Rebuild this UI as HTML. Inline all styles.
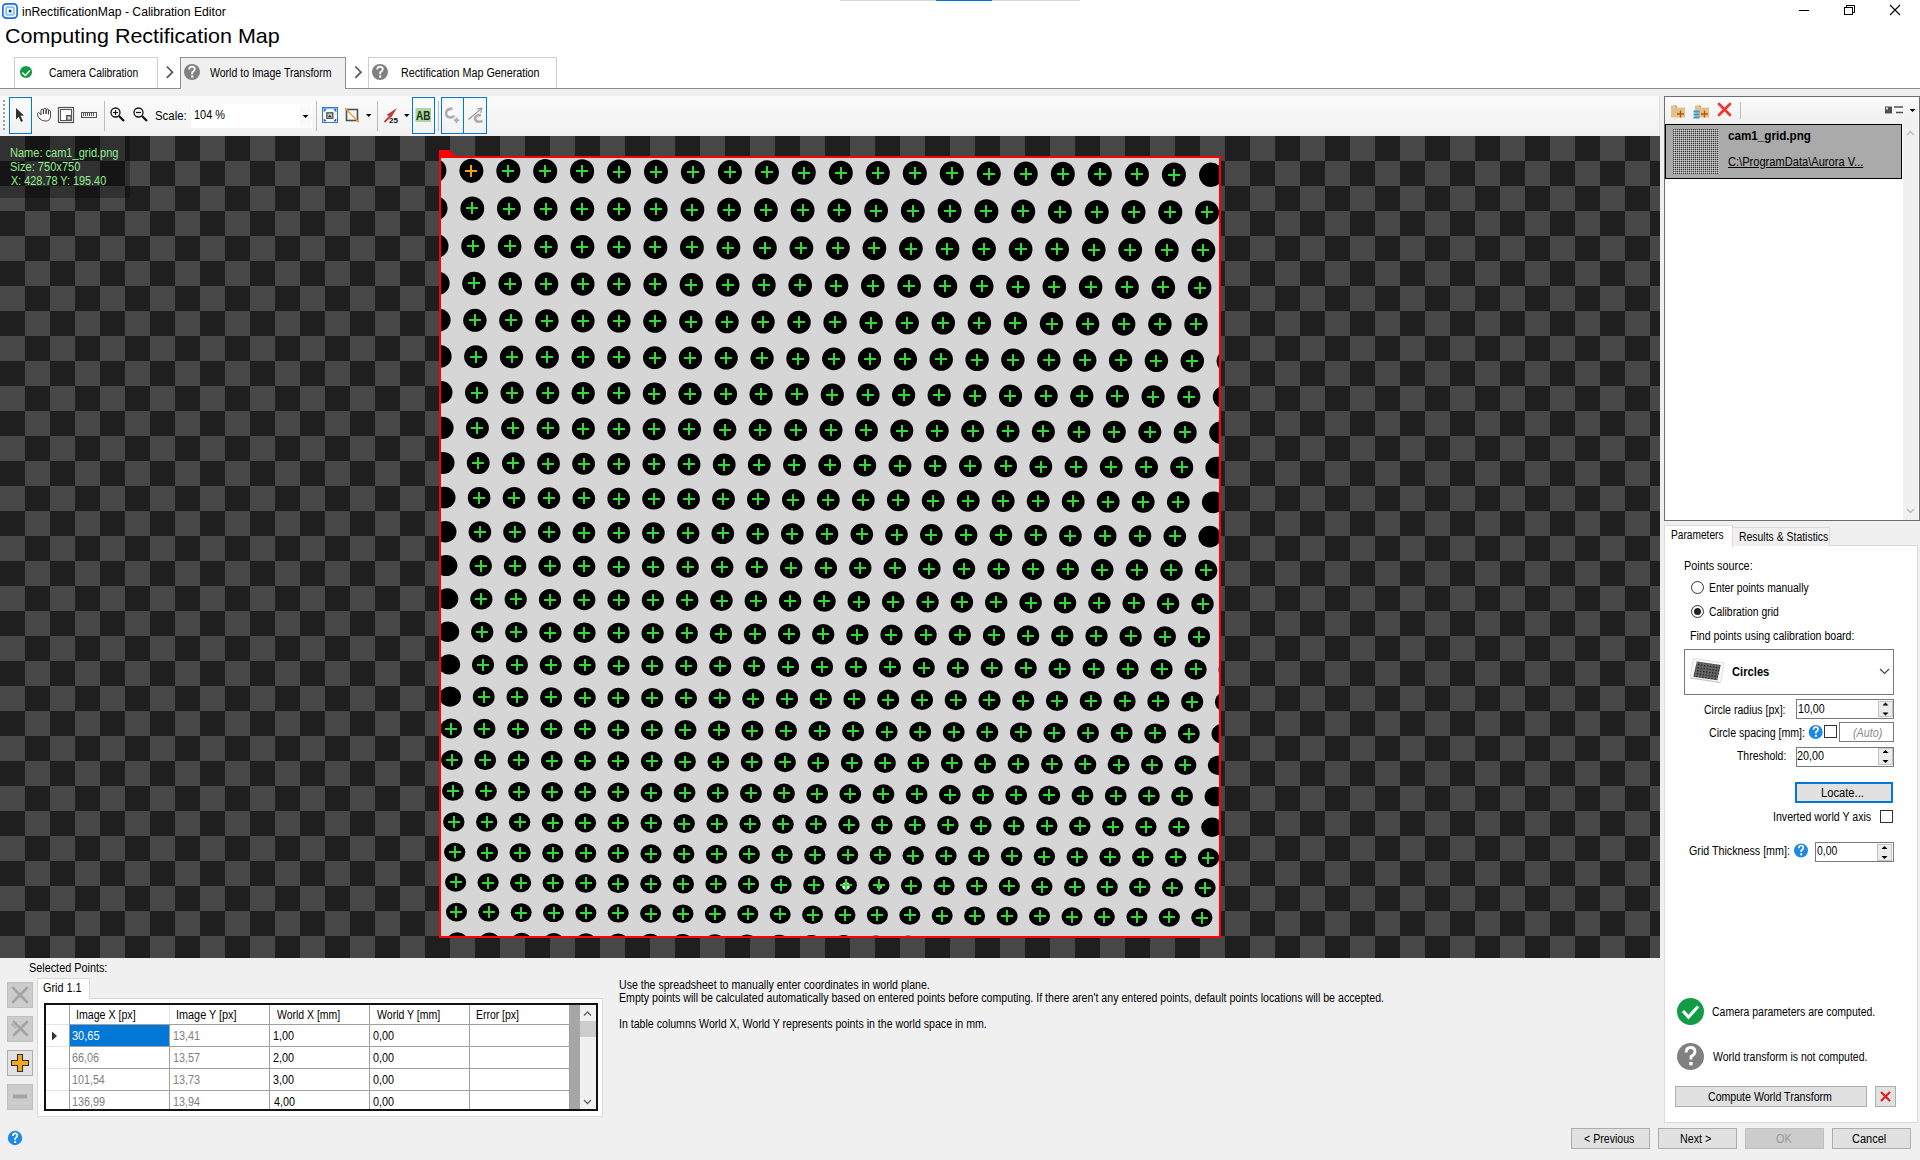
<!DOCTYPE html>
<html><head><meta charset="utf-8">
<style>
*{box-sizing:border-box;margin:0;padding:0}
html,body{width:1920px;height:1160px;overflow:hidden;background:#f0f0f0;font-family:"Liberation Sans",sans-serif;font-size:12px;color:#000}
.a{position:absolute}
.t{position:absolute;white-space:nowrap;line-height:14px}
.btn{position:absolute;background:#e1e1e1;border:1px solid #adadad;text-align:center;line-height:19px}
.inp{position:absolute;background:#fff;border:1px solid #7a7a7a}
svg{position:absolute}
#title{left:21.98px!important;top:5px!important;line-height:14px!important;transform-origin:0 0;transform:scaleX(1.0150)}
#hdr{left:4.78px!important;top:24px!important;line-height:24px!important;transform-origin:0 0;transform:scaleX(1.0232)}
#tab1{left:48.64px!important;top:66px!important;line-height:14px!important;transform-origin:0 0;transform:scaleX(0.8627)}
#tab2{left:210.00px!important;top:66px!important;line-height:14px!important;transform-origin:0 0;transform:scaleX(0.8768)}
#tab3{left:401.10px!important;top:66px!important;line-height:14px!important;transform-origin:0 0;transform:scaleX(0.8954)}
#scl{left:155.05px!important;top:109px!important;line-height:14px!important;transform-origin:0 0;transform:scaleX(0.9516)}
#pct{left:193.89px!important;top:108px!important;line-height:14px!important;transform-origin:0 0;transform:scaleX(0.9091)}
#nm{left:10.28px!important;top:146px!important;line-height:14px!important;transform-origin:0 0;transform:scaleX(0.9188)}
#sz{left:9.97px!important;top:160px!important;line-height:14px!important;transform-origin:0 0;transform:scaleX(0.9267)}
#xy{left:10.80px!important;top:174px!important;line-height:14px!important;transform-origin:0 0;transform:scaleX(0.9048)}
#fname{left:1728.00px!important;top:129px!important;line-height:14px!important;transform-origin:0 0;transform:scaleX(0.9718)}
#fpath{left:1728.00px!important;top:155px!important;line-height:14px!important;transform-origin:0 0;transform:scaleX(0.9247)}
#ptab{left:1671.45px!important;top:528px!important;line-height:14px!important;transform-origin:0 0;transform:scaleX(0.8475)}
#rtab{left:1738.63px!important;top:530px!important;line-height:14px!important;transform-origin:0 0;transform:scaleX(0.8693)}
#psrc{left:1684.10px!important;top:559px!important;line-height:14px!important;transform-origin:0 0;transform:scaleX(0.9027)}
#rad1{left:1709.14px!important;top:581px!important;line-height:14px!important;transform-origin:0 0;transform:scaleX(0.8635)}
#rad2{left:1708.84px!important;top:605px!important;line-height:14px!important;transform-origin:0 0;transform:scaleX(0.8646)}
#fpts{left:1690.12px!important;top:629px!important;line-height:14px!important;transform-origin:0 0;transform:scaleX(0.8837)}
#circ{left:1732.00px!important;top:665px!important;line-height:14px!important;transform-origin:0 0;transform:scaleX(0.9325)}
#lrad{left:1703.72px!important;top:703px!important;line-height:14px!important;transform-origin:0 0;transform:scaleX(0.8791)}
#vrad{left:1798.11px!important;top:702px!important;line-height:14px!important;transform-origin:0 0;transform:scaleX(0.8862)}
#lspc{left:1708.62px!important;top:726px!important;line-height:14px!important;transform-origin:0 0;transform:scaleX(0.8832)}
#auto{left:1852.50px!important;top:726px!important;line-height:14px!important;transform-origin:0 0;transform:scaleX(0.8969)}
#lthr{left:1736.70px!important;top:749px!important;line-height:14px!important;transform-origin:0 0;transform:scaleX(0.8696)}
#vthr{left:1797.20px!important;top:749px!important;line-height:14px!important;transform-origin:0 0;transform:scaleX(0.8966)}
#locb{left:1821.27px!important;top:786px!important;line-height:14px!important;transform-origin:0 0;transform:scaleX(0.9318)}
#linv{left:1773.32px!important;top:810px!important;line-height:14px!important;transform-origin:0 0;transform:scaleX(0.8845)}
#lgth{left:1688.61px!important;top:844px!important;line-height:14px!important;transform-origin:0 0;transform:scaleX(0.8919)}
#vgth{left:1817.00px!important;top:844px!important;line-height:14px!important;transform-origin:0 0;transform:scaleX(0.8696)}
#st1{left:1711.73px!important;top:1005px!important;line-height:14px!important;transform-origin:0 0;transform:scaleX(0.8741)}
#st2{left:1713.30px!important;top:1050px!important;line-height:14px!important;transform-origin:0 0;transform:scaleX(0.8750)}
#cwt{left:1707.62px!important;top:1090px!important;line-height:14px!important;transform-origin:0 0;transform:scaleX(0.8820)}
#bprev{left:1584.02px!important;top:1132px!important;line-height:14px!important;transform-origin:0 0;transform:scaleX(0.8839)}
#bnext{left:1680.31px!important;top:1132px!important;line-height:14px!important;transform-origin:0 0;transform:scaleX(0.8941)}
#bok{left:1775.60px!important;top:1132px!important;line-height:14px!important;transform-origin:0 0;transform:scaleX(0.9059)}
#bcan{left:1852.38px!important;top:1132px!important;line-height:14px!important;transform-origin:0 0;transform:scaleX(0.9167)}
#selp{left:29.10px!important;top:961px!important;line-height:14px!important;transform-origin:0 0;transform:scaleX(0.9035)}
#grid11{left:43.40px!important;top:981px!important;line-height:14px!important;transform-origin:0 0;transform:scaleX(0.9049)}
#h1{left:76.42px!important;top:1008px!important;line-height:14px!important;transform-origin:0 0;transform:scaleX(0.8848)}
#h2{left:176.10px!important;top:1008px!important;line-height:14px!important;transform-origin:0 0;transform:scaleX(0.9046)}
#h3{left:276.90px!important;top:1008px!important;line-height:14px!important;transform-origin:0 0;transform:scaleX(0.8722)}
#h4{left:377.20px!important;top:1008px!important;line-height:14px!important;transform-origin:0 0;transform:scaleX(0.8789)}
#h5{left:476.23px!important;top:1008px!important;line-height:14px!important;transform-origin:0 0;transform:scaleX(0.8688)}
#info1{left:619.32px!important;top:978px!important;line-height:14px!important;transform-origin:0 0;transform:scaleX(0.8823)}
#info2{left:619.32px!important;top:991px!important;line-height:14px!important;transform-origin:0 0;transform:scaleX(0.8846)}
#info3{left:619.32px!important;top:1017px!important;line-height:14px!important;transform-origin:0 0;transform:scaleX(0.8827)}
#c11{left:72.38px!important;top:1029px!important;line-height:14px!important;transform-origin:0 0;transform:scaleX(0.9172)}
#c12{left:172.50px!important;top:1029px!important;line-height:14px!important;transform-origin:0 0;transform:scaleX(0.9000)}
#c13{left:272.60px!important;top:1029px!important;line-height:14px!important;transform-origin:0 0;transform:scaleX(0.9000)}
#c14{left:373.00px!important;top:1029px!important;line-height:14px!important;transform-origin:0 0;transform:scaleX(0.9000)}
#c21{left:72.40px!important;top:1051px!important;line-height:14px!important;transform-origin:0 0;transform:scaleX(0.9000)}
#c22{left:172.50px!important;top:1051px!important;line-height:14px!important;transform-origin:0 0;transform:scaleX(0.9000)}
#c23{left:272.60px!important;top:1051px!important;line-height:14px!important;transform-origin:0 0;transform:scaleX(0.9000)}
#c24{left:373.00px!important;top:1051px!important;line-height:14px!important;transform-origin:0 0;transform:scaleX(0.9000)}
#c31{left:72.41px!important;top:1073px!important;line-height:14px!important;transform-origin:0 0;transform:scaleX(0.8944)}
#c32{left:172.50px!important;top:1073px!important;line-height:14px!important;transform-origin:0 0;transform:scaleX(0.9000)}
#c33{left:272.60px!important;top:1073px!important;line-height:14px!important;transform-origin:0 0;transform:scaleX(0.9000)}
#c34{left:373.00px!important;top:1073px!important;line-height:14px!important;transform-origin:0 0;transform:scaleX(0.9000)}
#c41{left:72.40px!important;top:1095px!important;line-height:14px!important;transform-origin:0 0;transform:scaleX(0.9000)}
#c42{left:172.50px!important;top:1095px!important;line-height:14px!important;transform-origin:0 0;transform:scaleX(0.9000)}
#c43{left:273.50px!important;top:1095px!important;line-height:14px!important;transform-origin:0 0;transform:scaleX(0.9000)}
#c44{left:373.00px!important;top:1095px!important;line-height:14px!important;transform-origin:0 0;transform:scaleX(0.9000)}
</style></head><body>
<!-- top white area -->
<div class="a" style="left:0;top:0;width:1920px;height:88px;background:#fff"></div>
<div class="a" style="left:840px;top:0;width:240px;height:1px;background:#d6d6d6"></div>
<div class="a" style="left:936px;top:0;width:56px;height:1px;background:#0078d7"></div>
<!-- app icon -->
<svg style="left:0;top:0" width="24" height="24">
<rect x="2" y="3" width="16" height="16" rx="4.5" fill="#1a6fe0"/>
<rect x="3.7" y="4.7" width="12.6" height="12.6" rx="3" fill="#fff"/>
<rect x="5.2" y="6.2" width="9.6" height="9.6" rx="2" fill="#8cc3f7"/>
<rect x="7" y="8" width="6" height="6" rx="1" fill="#f4f9ff"/>
<rect x="8.8" y="9.8" width="2.6" height="2.6" fill="#0d3f88"/>
</svg>
<div class="t" id="title" style="left:23px;top:4px">inRectificationMap - Calibration Editor</div>
<!-- window controls -->
<svg style="left:1790px;top:0" width="130" height="24">
<line x1="9" y1="10.5" x2="19" y2="10.5" stroke="#000" stroke-width="1"/>
<rect x="54.5" y="7.5" width="8" height="7" fill="none" stroke="#000"/>
<path d="M56.5 7.5 V5.5 H64.5 V12.5 H62.5" fill="none" stroke="#000"/>
<path d="M100 5 L110 15 M110 5 L100 15" stroke="#000" stroke-width="1.1"/>
</svg>
<div class="t" id="hdr" style="left:6px;top:24px;font-size:21px;line-height:24px">Computing Rectification Map</div>
<!-- wizard tabs -->
<div class="a" style="left:0;top:88px;width:180px;height:1px;background:#8f8f8f"></div>
<div class="a" style="left:346px;top:88px;width:1574px;height:1px;background:#8f8f8f"></div>
<div class="a" style="left:14px;top:57px;width:144px;height:31px;background:#fff;border:1px solid #cfcfc8;border-bottom:none"></div>
<div class="a" style="left:180px;top:57px;width:166px;height:32px;background:#f0f0f0;border:1px solid #8f8f8f;border-bottom:none"></div>
<div class="a" style="left:368px;top:57px;width:189px;height:31px;background:#fff;border:1px solid #cfcfc8;border-bottom:none"></div>
<svg style="left:0;top:50px" width="600" height="40">
<circle cx="26" cy="22" r="6.1" fill="#129943"/>
<path d="M22.3 22.4 L25.3 25.5 L30 20.4" fill="none" stroke="#fff" stroke-width="1.5"/>
<path d="M166.8 16.5 L172.5 22.2 L166.8 27.9" fill="none" stroke="#555" stroke-width="1.7"/>
<path d="M355.3 16.5 L361 22.2 L355.3 27.9" fill="none" stroke="#555" stroke-width="1.7"/>
<circle cx="192" cy="22" r="8" fill="#808080"/>
<circle cx="380" cy="22" r="8" fill="#808080"/>
<path d="M189.2 19.6 Q189.2 16.6 192 16.6 Q194.8 16.6 194.8 19.2 Q194.8 21 192.2 22.4 L192.2 24.2" fill="none" stroke="#fff" stroke-width="1.8"/>
<rect x="191.1" y="25.4" width="2.2" height="2.2" fill="#fff"/>
<path d="M377.2 19.6 Q377.2 16.6 380 16.6 Q382.8 16.6 382.8 19.2 Q382.8 21 380.2 22.4 L380.2 24.2" fill="none" stroke="#fff" stroke-width="1.8"/>
<rect x="379.1" y="25.4" width="2.2" height="2.2" fill="#fff"/>
</svg>
<div class="t" id="tab1" style="left:49px;top:65px">Camera Calibration</div>
<div class="t" id="tab2" style="left:210px;top:65px">World to Image Transform</div>
<div class="t" id="tab3" style="left:402px;top:65px">Rectification Map Generation</div>

<!-- toolbar -->
<div class="a" style="left:0;top:96px;width:1660px;height:40px;background:linear-gradient(#fbfbfb,#f1f1f1);border-right:1px solid #e0e0e0"></div>
<svg style="left:0;top:96px" width="500" height="40">
<g fill="#a0a0a0"><rect x="3" y="4" width="2" height="2"/><rect x="3" y="8" width="2" height="2"/><rect x="3" y="12" width="2" height="2"/><rect x="3" y="16" width="2" height="2"/><rect x="3" y="20" width="2" height="2"/><rect x="3" y="24" width="2" height="2"/><rect x="3" y="28" width="2" height="2"/><rect x="3" y="32" width="2" height="2"/></g>
<rect x="9.5" y="1.5" width="22" height="36" fill="none" stroke="#0078d7"/>
<path d="M16 12 L24 19.5 L20.5 19.8 L23 25 L21 26 L18.8 20.8 L16 23.5 Z" fill="#333"/>
<path d="M40 23 Q37 20 37.5 17.5 Q38 16 39.5 17 L41 19 L41 14.5 Q41 13.3 42.2 13.3 Q43.4 13.3 43.4 14.5 L43.4 18 L43.6 13.5 Q43.6 12.3 44.8 12.3 Q46 12.3 46 13.5 L46 18 L46.2 14 Q46.2 12.9 47.3 12.9 Q48.4 12.9 48.4 14 L48.4 18.3 L48.6 15.5 Q48.6 14.5 49.5 14.5 Q50.5 14.5 50.5 15.5 L50.5 20 Q50.5 25 45.5 25 Q42 25 40 23 Z" fill="#fff" stroke="#333" stroke-width="0.9"/>
<rect x="58.5" y="11.5" width="15" height="15" fill="none" stroke="#555" stroke-width="1.2"/>
<rect x="60.5" y="13.5" width="11" height="11" fill="#fff" stroke="#555"/>
<rect x="66" y="19" width="6" height="6" fill="#555"/><rect x="67.5" y="20.5" width="3" height="3" fill="#ddd"/>
<rect x="81.5" y="16.5" width="15" height="5" fill="none" stroke="#555"/>
<path d="M83.5 17 V20 M85.5 17 V20 M87.5 17 V20 M89.5 17 V20 M91.5 17 V20 M93.5 17 V20" stroke="#555"/>
<line x1="104.5" y1="5" x2="104.5" y2="35" stroke="#bdbdbd"/>
<circle cx="115.5" cy="16.5" r="4.5" fill="none" stroke="#111" stroke-width="1.3"/>
<path d="M113 16.5 H118 M115.5 14 V19" stroke="#111" stroke-width="1.2"/>
<path d="M119 20 L124 25" stroke="#111" stroke-width="2.2"/>
<circle cx="138.5" cy="16.5" r="4.5" fill="none" stroke="#111" stroke-width="1.3"/>
<path d="M136 16.5 H141" stroke="#111" stroke-width="1.2"/>
<path d="M142 20 L147 25" stroke="#111" stroke-width="2.2"/>
<rect x="191" y="8" width="121" height="24" fill="#fff"/>
<rect x="300" y="9" width="11" height="22" fill="#fafafa"/>
<path d="M302.5 19 H308.5 L305.5 22 Z" fill="#000"/>
<line x1="316.5" y1="5" x2="316.5" y2="35" stroke="#bdbdbd"/>
<rect x="322.5" y="11.5" width="15" height="15" fill="#f2f5f8" stroke="#3a78b8"/><path d="M323 12 H337" stroke="#1a80e0"/>
<rect x="326.8" y="16.8" width="6" height="5.5" fill="#c4c4c4" stroke="#555" stroke-width="1.3"/>
<path d="M328 21 L329.8 19 L331.6 21 Z" fill="#222"/>
<path d="M324 15.5 V13.5 H326 Z M336 13.5 H334 L336 15.5 Z M324 23 V25 H326 Z M336 25 H334 L336 23 Z" fill="#2a5ad8" stroke="#2a5ad8" stroke-width="0.8"/>
<rect x="346.5" y="13.5" width="11" height="11" fill="none" stroke="#4a4f55" stroke-width="1.6"/>
<line x1="345" y1="12" x2="359" y2="26.5" stroke="#f0a030" stroke-width="1.4"/>
<path d="M366 18 H371.5 L368.75 21 Z" fill="#000"/>
<line x1="377.5" y1="5" x2="377.5" y2="35" stroke="#bdbdbd"/>
<path d="M384.5 26 L391 19.5" stroke="#c43a3a" stroke-width="1.8"/>
<path d="M397 12 L386.5 19 L391.5 21 Z" fill="#c43a3a"/>
<text x="389" y="26.8" font-family="Liberation Sans" font-size="8" font-weight="bold" textLength="9" lengthAdjust="spacingAndGlyphs" fill="#111">25</text>
<path d="M404 18 H409.5 L406.75 21 Z" fill="#000"/>
<rect x="412.5" y="1.5" width="22" height="36" fill="none" stroke="#0078d7"/>
<rect x="415.5" y="12" width="15.5" height="14" fill="#add5a0"/>
<text x="416" y="24.2" font-family="Liberation Sans" font-size="13.5" font-weight="bold" textLength="14.5" lengthAdjust="spacingAndGlyphs" fill="#17310c">AB</text>
<line x1="438.5" y1="5" x2="438.5" y2="35" stroke="#bdbdbd"/>
<rect x="441.5" y="1.5" width="22" height="36" fill="none" stroke="#0078d7"/>
<rect x="463.5" y="1.5" width="23" height="36" fill="none" stroke="#0078d7"/>
<path d="M452.5 12.5 Q446 13 446 17.5 Q446.5 21.5 451 21.5 L454.5 20" fill="none" stroke="#ababab" stroke-width="2.4"/>
<path d="M453.8 24.3 H459.2 M456.5 21.6 V27" stroke="#b0b0b0" stroke-width="2"/>
<path d="M468.5 23.5 L481.5 12.5" stroke="#9c9c9c" stroke-width="1.1"/>
<path d="M477 13 L481.8 12.2 L480.8 17" fill="none" stroke="#9c9c9c" stroke-width="1.1"/>
<path d="M481 19 Q475 19 475 22.5 Q475.5 25.8 479 25.8 L482.5 25" fill="none" stroke="#ababab" stroke-width="2.4"/>
</svg>
<div class="t" id="scl" style="left:156px;top:108px">Scale:</div>
<div class="t" id="pct" style="left:195px;top:108px">104 %</div>

<!-- canvas -->
<svg style="left:0;top:136px" width="1660" height="822" shape-rendering="crispEdges">
<defs><pattern id="chk" x="0" y="0" width="50" height="50" patternUnits="userSpaceOnUse">
<rect width="50" height="50" fill="#1f1f1f"/><rect width="25" height="25" fill="#474747"/><rect x="25" y="25" width="25" height="25" fill="#474747"/></pattern>
<filter id="nz" x="0" y="0" width="100%" height="100%"><feTurbulence type="fractalNoise" baseFrequency="0.9" numOctaves="2" seed="3"/><feColorMatrix values="0 0 0 0 0.84  0 0 0 0 0.84  0 0 0 0 0.84  0 0 0 0.12 0"/><feBlend in2="SourceGraphic"/></filter>
</defs>
<rect width="1660" height="822" fill="url(#chk)"/>
<rect x="0" y="0" width="130" height="62" fill="#000" fill-opacity="0.3"/>
<path d="M439 14 H449.5 L456 20 H1221 V802 H439 Z" fill="#ff0000"/>
<rect x="441" y="22" width="778" height="778" fill="#d6d6d6"/>
<clipPath id="imgclip"><rect x="441" y="22" width="778" height="778"/></clipPath>
<g clip-path="url(#imgclip)">
<g fill="#000" shape-rendering="geometricPrecision"><ellipse cx="434.4" cy="34.6" rx="12.0" ry="12.1"/><ellipse cx="471.4" cy="34.8" rx="12.0" ry="12.1"/><ellipse cx="508.3" cy="35.0" rx="12.0" ry="12.1"/><ellipse cx="545.2" cy="35.2" rx="12.0" ry="12.1"/><ellipse cx="582.1" cy="35.4" rx="12.0" ry="12.1"/><ellipse cx="619.0" cy="35.6" rx="12.0" ry="12.1"/><ellipse cx="656.0" cy="35.8" rx="12.0" ry="12.1"/><ellipse cx="692.9" cy="36.0" rx="12.0" ry="12.1"/><ellipse cx="729.9" cy="36.2" rx="12.0" ry="12.1"/><ellipse cx="766.9" cy="36.4" rx="12.0" ry="12.1"/><ellipse cx="803.8" cy="36.6" rx="12.0" ry="12.1"/><ellipse cx="840.8" cy="36.8" rx="12.0" ry="12.1"/><ellipse cx="877.8" cy="37.0" rx="12.0" ry="12.1"/><ellipse cx="914.8" cy="37.2" rx="12.0" ry="12.1"/><ellipse cx="951.8" cy="37.4" rx="12.0" ry="12.2"/><ellipse cx="988.8" cy="37.6" rx="12.0" ry="12.2"/><ellipse cx="1025.8" cy="37.8" rx="12.0" ry="12.2"/><ellipse cx="1062.8" cy="38.0" rx="12.0" ry="12.2"/><ellipse cx="1099.8" cy="38.2" rx="12.0" ry="12.2"/><ellipse cx="1136.9" cy="38.4" rx="12.0" ry="12.2"/><ellipse cx="1173.9" cy="38.6" rx="12.0" ry="12.2"/><ellipse cx="1211.0" cy="38.8" rx="12.0" ry="12.2"/><ellipse cx="435.6" cy="72.2" rx="11.9" ry="12.0"/><ellipse cx="472.3" cy="72.4" rx="11.9" ry="12.0"/><ellipse cx="508.9" cy="72.6" rx="11.9" ry="12.0"/><ellipse cx="545.6" cy="72.8" rx="11.9" ry="12.0"/><ellipse cx="582.3" cy="73.0" rx="11.9" ry="12.0"/><ellipse cx="619.0" cy="73.2" rx="11.9" ry="12.0"/><ellipse cx="655.7" cy="73.4" rx="11.9" ry="12.0"/><ellipse cx="692.4" cy="73.6" rx="11.9" ry="12.0"/><ellipse cx="729.1" cy="73.8" rx="11.9" ry="12.0"/><ellipse cx="765.9" cy="74.0" rx="11.9" ry="12.0"/><ellipse cx="802.6" cy="74.2" rx="11.9" ry="12.0"/><ellipse cx="839.3" cy="74.4" rx="11.9" ry="12.0"/><ellipse cx="876.1" cy="74.6" rx="11.9" ry="12.0"/><ellipse cx="912.8" cy="74.8" rx="11.9" ry="12.0"/><ellipse cx="949.6" cy="75.1" rx="11.9" ry="12.0"/><ellipse cx="986.4" cy="75.3" rx="12.0" ry="12.0"/><ellipse cx="1023.2" cy="75.5" rx="12.0" ry="12.0"/><ellipse cx="1059.9" cy="75.7" rx="12.0" ry="12.0"/><ellipse cx="1096.7" cy="75.9" rx="12.0" ry="12.0"/><ellipse cx="1133.5" cy="76.1" rx="12.0" ry="12.0"/><ellipse cx="1170.3" cy="76.3" rx="12.0" ry="12.0"/><ellipse cx="1207.1" cy="76.5" rx="12.0" ry="12.0"/><ellipse cx="436.7" cy="110.0" rx="11.8" ry="11.8"/><ellipse cx="473.1" cy="110.2" rx="11.8" ry="11.8"/><ellipse cx="509.6" cy="110.4" rx="11.8" ry="11.8"/><ellipse cx="546.0" cy="110.6" rx="11.8" ry="11.8"/><ellipse cx="582.5" cy="110.8" rx="11.9" ry="11.8"/><ellipse cx="619.0" cy="111.0" rx="11.9" ry="11.8"/><ellipse cx="655.4" cy="111.2" rx="11.9" ry="11.8"/><ellipse cx="691.9" cy="111.4" rx="11.9" ry="11.8"/><ellipse cx="728.4" cy="111.6" rx="11.9" ry="11.8"/><ellipse cx="764.9" cy="111.8" rx="11.9" ry="11.8"/><ellipse cx="801.4" cy="112.0" rx="11.9" ry="11.8"/><ellipse cx="837.9" cy="112.2" rx="11.9" ry="11.8"/><ellipse cx="874.4" cy="112.4" rx="11.9" ry="11.8"/><ellipse cx="910.9" cy="112.6" rx="11.9" ry="11.8"/><ellipse cx="947.5" cy="112.8" rx="11.9" ry="11.8"/><ellipse cx="984.0" cy="113.1" rx="11.9" ry="11.9"/><ellipse cx="1020.6" cy="113.3" rx="11.9" ry="11.9"/><ellipse cx="1057.1" cy="113.5" rx="11.9" ry="11.9"/><ellipse cx="1093.7" cy="113.7" rx="11.9" ry="11.9"/><ellipse cx="1130.2" cy="113.9" rx="11.9" ry="11.9"/><ellipse cx="1166.8" cy="114.1" rx="11.9" ry="11.9"/><ellipse cx="1203.4" cy="114.3" rx="11.9" ry="11.9"/><ellipse cx="437.8" cy="147.3" rx="11.8" ry="11.7"/><ellipse cx="474.0" cy="147.5" rx="11.8" ry="11.7"/><ellipse cx="510.2" cy="147.7" rx="11.8" ry="11.7"/><ellipse cx="546.5" cy="147.9" rx="11.8" ry="11.7"/><ellipse cx="582.7" cy="148.1" rx="11.8" ry="11.7"/><ellipse cx="618.9" cy="148.3" rx="11.8" ry="11.7"/><ellipse cx="655.2" cy="148.5" rx="11.8" ry="11.7"/><ellipse cx="691.4" cy="148.7" rx="11.8" ry="11.7"/><ellipse cx="727.7" cy="148.9" rx="11.8" ry="11.7"/><ellipse cx="763.9" cy="149.1" rx="11.8" ry="11.7"/><ellipse cx="800.2" cy="149.3" rx="11.8" ry="11.7"/><ellipse cx="836.5" cy="149.5" rx="11.8" ry="11.7"/><ellipse cx="872.8" cy="149.7" rx="11.8" ry="11.7"/><ellipse cx="909.1" cy="150.0" rx="11.8" ry="11.7"/><ellipse cx="945.4" cy="150.2" rx="11.8" ry="11.7"/><ellipse cx="981.7" cy="150.4" rx="11.8" ry="11.7"/><ellipse cx="1018.0" cy="150.6" rx="11.8" ry="11.7"/><ellipse cx="1054.3" cy="150.8" rx="11.8" ry="11.7"/><ellipse cx="1090.6" cy="151.0" rx="11.8" ry="11.7"/><ellipse cx="1127.0" cy="151.2" rx="11.8" ry="11.7"/><ellipse cx="1163.3" cy="151.4" rx="11.8" ry="11.7"/><ellipse cx="1199.6" cy="151.6" rx="11.8" ry="11.7"/><ellipse cx="438.9" cy="184.1" rx="11.7" ry="11.5"/><ellipse cx="474.9" cy="184.3" rx="11.7" ry="11.5"/><ellipse cx="510.9" cy="184.5" rx="11.7" ry="11.5"/><ellipse cx="546.9" cy="184.7" rx="11.7" ry="11.5"/><ellipse cx="582.9" cy="184.9" rx="11.7" ry="11.5"/><ellipse cx="618.9" cy="185.1" rx="11.7" ry="11.5"/><ellipse cx="654.9" cy="185.3" rx="11.7" ry="11.5"/><ellipse cx="690.9" cy="185.5" rx="11.7" ry="11.5"/><ellipse cx="727.0" cy="185.8" rx="11.7" ry="11.5"/><ellipse cx="763.0" cy="186.0" rx="11.7" ry="11.5"/><ellipse cx="799.0" cy="186.2" rx="11.7" ry="11.5"/><ellipse cx="835.1" cy="186.4" rx="11.7" ry="11.5"/><ellipse cx="871.1" cy="186.6" rx="11.7" ry="11.5"/><ellipse cx="907.2" cy="186.8" rx="11.7" ry="11.5"/><ellipse cx="943.3" cy="187.0" rx="11.7" ry="11.6"/><ellipse cx="979.4" cy="187.2" rx="11.7" ry="11.6"/><ellipse cx="1015.4" cy="187.4" rx="11.7" ry="11.6"/><ellipse cx="1051.5" cy="187.6" rx="11.7" ry="11.6"/><ellipse cx="1087.6" cy="187.9" rx="11.7" ry="11.6"/><ellipse cx="1123.7" cy="188.1" rx="11.7" ry="11.6"/><ellipse cx="1159.9" cy="188.3" rx="11.7" ry="11.6"/><ellipse cx="1196.0" cy="188.5" rx="11.7" ry="11.6"/><ellipse cx="440.0" cy="220.4" rx="11.6" ry="11.4"/><ellipse cx="475.7" cy="220.6" rx="11.6" ry="11.4"/><ellipse cx="511.5" cy="220.9" rx="11.6" ry="11.4"/><ellipse cx="547.3" cy="221.1" rx="11.6" ry="11.4"/><ellipse cx="583.1" cy="221.3" rx="11.6" ry="11.4"/><ellipse cx="618.8" cy="221.5" rx="11.6" ry="11.4"/><ellipse cx="654.6" cy="221.7" rx="11.6" ry="11.4"/><ellipse cx="690.4" cy="221.9" rx="11.6" ry="11.4"/><ellipse cx="726.2" cy="222.1" rx="11.6" ry="11.4"/><ellipse cx="762.1" cy="222.3" rx="11.6" ry="11.4"/><ellipse cx="797.9" cy="222.6" rx="11.6" ry="11.4"/><ellipse cx="833.7" cy="222.8" rx="11.6" ry="11.4"/><ellipse cx="869.5" cy="223.0" rx="11.6" ry="11.4"/><ellipse cx="905.4" cy="223.2" rx="11.6" ry="11.4"/><ellipse cx="941.2" cy="223.4" rx="11.7" ry="11.4"/><ellipse cx="977.1" cy="223.6" rx="11.7" ry="11.4"/><ellipse cx="1012.9" cy="223.8" rx="11.7" ry="11.4"/><ellipse cx="1048.8" cy="224.0" rx="11.7" ry="11.4"/><ellipse cx="1084.7" cy="224.3" rx="11.7" ry="11.4"/><ellipse cx="1120.6" cy="224.5" rx="11.7" ry="11.4"/><ellipse cx="1156.4" cy="224.7" rx="11.7" ry="11.4"/><ellipse cx="1192.3" cy="224.9" rx="11.7" ry="11.5"/><ellipse cx="1228.2" cy="225.1" rx="11.7" ry="11.5"/><ellipse cx="441.0" cy="256.3" rx="11.5" ry="11.2"/><ellipse cx="476.6" cy="256.6" rx="11.6" ry="11.2"/><ellipse cx="512.1" cy="256.8" rx="11.6" ry="11.2"/><ellipse cx="547.7" cy="257.0" rx="11.6" ry="11.2"/><ellipse cx="583.2" cy="257.2" rx="11.6" ry="11.2"/><ellipse cx="618.8" cy="257.4" rx="11.6" ry="11.2"/><ellipse cx="654.4" cy="257.6" rx="11.6" ry="11.2"/><ellipse cx="690.0" cy="257.8" rx="11.6" ry="11.2"/><ellipse cx="725.5" cy="258.1" rx="11.6" ry="11.2"/><ellipse cx="761.1" cy="258.3" rx="11.6" ry="11.3"/><ellipse cx="796.7" cy="258.5" rx="11.6" ry="11.3"/><ellipse cx="832.3" cy="258.7" rx="11.6" ry="11.3"/><ellipse cx="868.0" cy="258.9" rx="11.6" ry="11.3"/><ellipse cx="903.6" cy="259.1" rx="11.6" ry="11.3"/><ellipse cx="939.2" cy="259.3" rx="11.6" ry="11.3"/><ellipse cx="974.8" cy="259.6" rx="11.6" ry="11.3"/><ellipse cx="1010.5" cy="259.8" rx="11.6" ry="11.3"/><ellipse cx="1046.1" cy="260.0" rx="11.6" ry="11.3"/><ellipse cx="1081.8" cy="260.2" rx="11.6" ry="11.3"/><ellipse cx="1117.4" cy="260.4" rx="11.6" ry="11.3"/><ellipse cx="1153.1" cy="260.6" rx="11.6" ry="11.3"/><ellipse cx="1188.8" cy="260.8" rx="11.6" ry="11.3"/><ellipse cx="1224.4" cy="261.1" rx="11.6" ry="11.3"/><ellipse cx="442.1" cy="291.8" rx="11.5" ry="11.1"/><ellipse cx="477.4" cy="292.0" rx="11.5" ry="11.1"/><ellipse cx="512.7" cy="292.3" rx="11.5" ry="11.1"/><ellipse cx="548.1" cy="292.5" rx="11.5" ry="11.1"/><ellipse cx="583.4" cy="292.7" rx="11.5" ry="11.1"/><ellipse cx="618.8" cy="292.9" rx="11.5" ry="11.1"/><ellipse cx="654.1" cy="293.1" rx="11.5" ry="11.1"/><ellipse cx="689.5" cy="293.3" rx="11.5" ry="11.1"/><ellipse cx="724.8" cy="293.5" rx="11.5" ry="11.1"/><ellipse cx="760.2" cy="293.8" rx="11.5" ry="11.1"/><ellipse cx="795.6" cy="294.0" rx="11.5" ry="11.1"/><ellipse cx="831.0" cy="294.2" rx="11.5" ry="11.1"/><ellipse cx="866.4" cy="294.4" rx="11.5" ry="11.1"/><ellipse cx="901.8" cy="294.6" rx="11.5" ry="11.1"/><ellipse cx="937.2" cy="294.8" rx="11.5" ry="11.1"/><ellipse cx="972.6" cy="295.1" rx="11.5" ry="11.1"/><ellipse cx="1008.0" cy="295.3" rx="11.5" ry="11.1"/><ellipse cx="1043.4" cy="295.5" rx="11.5" ry="11.1"/><ellipse cx="1078.9" cy="295.7" rx="11.5" ry="11.2"/><ellipse cx="1114.3" cy="295.9" rx="11.5" ry="11.2"/><ellipse cx="1149.8" cy="296.1" rx="11.5" ry="11.2"/><ellipse cx="1185.2" cy="296.4" rx="11.5" ry="11.2"/><ellipse cx="1220.7" cy="296.6" rx="11.5" ry="11.2"/><ellipse cx="443.1" cy="326.9" rx="11.4" ry="11.0"/><ellipse cx="478.2" cy="327.1" rx="11.4" ry="11.0"/><ellipse cx="513.4" cy="327.3" rx="11.4" ry="11.0"/><ellipse cx="548.5" cy="327.5" rx="11.4" ry="11.0"/><ellipse cx="583.6" cy="327.7" rx="11.4" ry="11.0"/><ellipse cx="618.7" cy="327.9" rx="11.4" ry="11.0"/><ellipse cx="653.9" cy="328.2" rx="11.4" ry="11.0"/><ellipse cx="689.0" cy="328.4" rx="11.4" ry="11.0"/><ellipse cx="724.2" cy="328.6" rx="11.4" ry="11.0"/><ellipse cx="759.3" cy="328.8" rx="11.4" ry="11.0"/><ellipse cx="794.5" cy="329.0" rx="11.4" ry="11.0"/><ellipse cx="829.7" cy="329.3" rx="11.4" ry="11.0"/><ellipse cx="864.8" cy="329.5" rx="11.4" ry="11.0"/><ellipse cx="900.0" cy="329.7" rx="11.4" ry="11.0"/><ellipse cx="935.2" cy="329.9" rx="11.4" ry="11.0"/><ellipse cx="970.4" cy="330.1" rx="11.4" ry="11.0"/><ellipse cx="1005.6" cy="330.3" rx="11.4" ry="11.0"/><ellipse cx="1040.8" cy="330.6" rx="11.4" ry="11.0"/><ellipse cx="1076.0" cy="330.8" rx="11.4" ry="11.0"/><ellipse cx="1111.2" cy="331.0" rx="11.4" ry="11.0"/><ellipse cx="1146.5" cy="331.2" rx="11.5" ry="11.0"/><ellipse cx="1181.7" cy="331.4" rx="11.5" ry="11.0"/><ellipse cx="1216.9" cy="331.7" rx="11.5" ry="11.0"/><ellipse cx="444.2" cy="361.5" rx="11.3" ry="10.8"/><ellipse cx="479.1" cy="361.7" rx="11.3" ry="10.8"/><ellipse cx="514.0" cy="361.9" rx="11.3" ry="10.8"/><ellipse cx="548.9" cy="362.1" rx="11.3" ry="10.8"/><ellipse cx="583.8" cy="362.4" rx="11.3" ry="10.8"/><ellipse cx="618.7" cy="362.6" rx="11.3" ry="10.8"/><ellipse cx="653.6" cy="362.8" rx="11.4" ry="10.8"/><ellipse cx="688.5" cy="363.0" rx="11.4" ry="10.8"/><ellipse cx="723.5" cy="363.2" rx="11.4" ry="10.8"/><ellipse cx="758.4" cy="363.5" rx="11.4" ry="10.8"/><ellipse cx="793.4" cy="363.7" rx="11.4" ry="10.8"/><ellipse cx="828.3" cy="363.9" rx="11.4" ry="10.9"/><ellipse cx="863.3" cy="364.1" rx="11.4" ry="10.9"/><ellipse cx="898.3" cy="364.3" rx="11.4" ry="10.9"/><ellipse cx="933.2" cy="364.6" rx="11.4" ry="10.9"/><ellipse cx="968.2" cy="364.8" rx="11.4" ry="10.9"/><ellipse cx="1003.2" cy="365.0" rx="11.4" ry="10.9"/><ellipse cx="1038.2" cy="365.2" rx="11.4" ry="10.9"/><ellipse cx="1073.2" cy="365.4" rx="11.4" ry="10.9"/><ellipse cx="1108.2" cy="365.7" rx="11.4" ry="10.9"/><ellipse cx="1143.2" cy="365.9" rx="11.4" ry="10.9"/><ellipse cx="1178.3" cy="366.1" rx="11.4" ry="10.9"/><ellipse cx="1213.3" cy="366.3" rx="11.4" ry="10.9"/><ellipse cx="445.2" cy="395.7" rx="11.3" ry="10.7"/><ellipse cx="479.9" cy="395.9" rx="11.3" ry="10.7"/><ellipse cx="514.5" cy="396.1" rx="11.3" ry="10.7"/><ellipse cx="549.2" cy="396.3" rx="11.3" ry="10.7"/><ellipse cx="583.9" cy="396.6" rx="11.3" ry="10.7"/><ellipse cx="618.7" cy="396.8" rx="11.3" ry="10.7"/><ellipse cx="653.4" cy="397.0" rx="11.3" ry="10.7"/><ellipse cx="688.1" cy="397.2" rx="11.3" ry="10.7"/><ellipse cx="722.8" cy="397.4" rx="11.3" ry="10.7"/><ellipse cx="757.6" cy="397.7" rx="11.3" ry="10.7"/><ellipse cx="792.3" cy="397.9" rx="11.3" ry="10.7"/><ellipse cx="827.0" cy="398.1" rx="11.3" ry="10.7"/><ellipse cx="861.8" cy="398.3" rx="11.3" ry="10.7"/><ellipse cx="896.5" cy="398.6" rx="11.3" ry="10.7"/><ellipse cx="931.3" cy="398.8" rx="11.3" ry="10.7"/><ellipse cx="966.1" cy="399.0" rx="11.3" ry="10.7"/><ellipse cx="1000.9" cy="399.2" rx="11.3" ry="10.7"/><ellipse cx="1035.6" cy="399.4" rx="11.3" ry="10.7"/><ellipse cx="1070.4" cy="399.7" rx="11.3" ry="10.8"/><ellipse cx="1105.2" cy="399.9" rx="11.3" ry="10.8"/><ellipse cx="1140.0" cy="400.1" rx="11.3" ry="10.8"/><ellipse cx="1174.8" cy="400.3" rx="11.3" ry="10.8"/><ellipse cx="1209.7" cy="400.6" rx="11.3" ry="10.8"/><ellipse cx="446.2" cy="429.5" rx="11.2" ry="10.6"/><ellipse cx="480.7" cy="429.7" rx="11.2" ry="10.6"/><ellipse cx="515.1" cy="429.9" rx="11.2" ry="10.6"/><ellipse cx="549.6" cy="430.1" rx="11.2" ry="10.6"/><ellipse cx="584.1" cy="430.4" rx="11.2" ry="10.6"/><ellipse cx="618.6" cy="430.6" rx="11.2" ry="10.6"/><ellipse cx="653.1" cy="430.8" rx="11.2" ry="10.6"/><ellipse cx="687.6" cy="431.0" rx="11.2" ry="10.6"/><ellipse cx="722.2" cy="431.2" rx="11.2" ry="10.6"/><ellipse cx="756.7" cy="431.5" rx="11.2" ry="10.6"/><ellipse cx="791.2" cy="431.7" rx="11.2" ry="10.6"/><ellipse cx="825.8" cy="431.9" rx="11.2" ry="10.6"/><ellipse cx="860.3" cy="432.1" rx="11.2" ry="10.6"/><ellipse cx="894.8" cy="432.4" rx="11.2" ry="10.6"/><ellipse cx="929.4" cy="432.6" rx="11.2" ry="10.6"/><ellipse cx="964.0" cy="432.8" rx="11.2" ry="10.6"/><ellipse cx="998.5" cy="433.0" rx="11.2" ry="10.6"/><ellipse cx="1033.1" cy="433.3" rx="11.2" ry="10.6"/><ellipse cx="1067.7" cy="433.5" rx="11.2" ry="10.6"/><ellipse cx="1102.3" cy="433.7" rx="11.2" ry="10.6"/><ellipse cx="1136.9" cy="433.9" rx="11.2" ry="10.6"/><ellipse cx="1171.5" cy="434.2" rx="11.2" ry="10.6"/><ellipse cx="1206.1" cy="434.4" rx="11.2" ry="10.7"/><ellipse cx="447.2" cy="462.8" rx="11.1" ry="10.5"/><ellipse cx="481.4" cy="463.1" rx="11.1" ry="10.5"/><ellipse cx="515.7" cy="463.3" rx="11.1" ry="10.5"/><ellipse cx="550.0" cy="463.5" rx="11.1" ry="10.5"/><ellipse cx="584.3" cy="463.7" rx="11.1" ry="10.5"/><ellipse cx="618.6" cy="464.0" rx="11.1" ry="10.5"/><ellipse cx="652.9" cy="464.2" rx="11.1" ry="10.5"/><ellipse cx="687.2" cy="464.4" rx="11.2" ry="10.5"/><ellipse cx="721.5" cy="464.6" rx="11.2" ry="10.5"/><ellipse cx="755.8" cy="464.9" rx="11.2" ry="10.5"/><ellipse cx="790.1" cy="465.1" rx="11.2" ry="10.5"/><ellipse cx="824.5" cy="465.3" rx="11.2" ry="10.5"/><ellipse cx="858.8" cy="465.5" rx="11.2" ry="10.5"/><ellipse cx="893.2" cy="465.8" rx="11.2" ry="10.5"/><ellipse cx="927.5" cy="466.0" rx="11.2" ry="10.5"/><ellipse cx="961.9" cy="466.2" rx="11.2" ry="10.5"/><ellipse cx="996.2" cy="466.4" rx="11.2" ry="10.5"/><ellipse cx="1030.6" cy="466.7" rx="11.2" ry="10.5"/><ellipse cx="1065.0" cy="466.9" rx="11.2" ry="10.5"/><ellipse cx="1099.4" cy="467.1" rx="11.2" ry="10.5"/><ellipse cx="1133.7" cy="467.3" rx="11.2" ry="10.5"/><ellipse cx="1168.1" cy="467.6" rx="11.2" ry="10.5"/><ellipse cx="1202.5" cy="467.8" rx="11.2" ry="10.5"/><ellipse cx="448.1" cy="495.8" rx="11.1" ry="10.3"/><ellipse cx="482.2" cy="496.1" rx="11.1" ry="10.3"/><ellipse cx="516.3" cy="496.3" rx="11.1" ry="10.3"/><ellipse cx="550.4" cy="496.5" rx="11.1" ry="10.3"/><ellipse cx="584.5" cy="496.7" rx="11.1" ry="10.3"/><ellipse cx="618.5" cy="497.0" rx="11.1" ry="10.3"/><ellipse cx="652.6" cy="497.2" rx="11.1" ry="10.3"/><ellipse cx="686.7" cy="497.4" rx="11.1" ry="10.3"/><ellipse cx="720.9" cy="497.7" rx="11.1" ry="10.3"/><ellipse cx="755.0" cy="497.9" rx="11.1" ry="10.3"/><ellipse cx="789.1" cy="498.1" rx="11.1" ry="10.3"/><ellipse cx="823.2" cy="498.3" rx="11.1" ry="10.3"/><ellipse cx="857.4" cy="498.6" rx="11.1" ry="10.3"/><ellipse cx="891.5" cy="498.8" rx="11.1" ry="10.4"/><ellipse cx="925.6" cy="499.0" rx="11.1" ry="10.4"/><ellipse cx="959.8" cy="499.2" rx="11.1" ry="10.4"/><ellipse cx="994.0" cy="499.5" rx="11.1" ry="10.4"/><ellipse cx="1028.1" cy="499.7" rx="11.1" ry="10.4"/><ellipse cx="1062.3" cy="499.9" rx="11.1" ry="10.4"/><ellipse cx="1096.5" cy="500.1" rx="11.1" ry="10.4"/><ellipse cx="1130.6" cy="500.4" rx="11.1" ry="10.4"/><ellipse cx="1164.8" cy="500.6" rx="11.1" ry="10.4"/><ellipse cx="1199.0" cy="500.8" rx="11.1" ry="10.4"/><ellipse cx="449.1" cy="528.4" rx="11.0" ry="10.2"/><ellipse cx="483.0" cy="528.7" rx="11.0" ry="10.2"/><ellipse cx="516.9" cy="528.9" rx="11.0" ry="10.2"/><ellipse cx="550.7" cy="529.1" rx="11.0" ry="10.2"/><ellipse cx="584.6" cy="529.4" rx="11.0" ry="10.2"/><ellipse cx="618.5" cy="529.6" rx="11.0" ry="10.2"/><ellipse cx="652.4" cy="529.8" rx="11.0" ry="10.2"/><ellipse cx="686.3" cy="530.0" rx="11.0" ry="10.2"/><ellipse cx="720.2" cy="530.3" rx="11.0" ry="10.2"/><ellipse cx="754.1" cy="530.5" rx="11.0" ry="10.2"/><ellipse cx="788.1" cy="530.7" rx="11.0" ry="10.2"/><ellipse cx="822.0" cy="530.9" rx="11.0" ry="10.2"/><ellipse cx="855.9" cy="531.2" rx="11.0" ry="10.2"/><ellipse cx="889.9" cy="531.4" rx="11.0" ry="10.2"/><ellipse cx="923.8" cy="531.6" rx="11.0" ry="10.2"/><ellipse cx="957.8" cy="531.9" rx="11.0" ry="10.2"/><ellipse cx="991.7" cy="532.1" rx="11.0" ry="10.2"/><ellipse cx="1025.7" cy="532.3" rx="11.0" ry="10.2"/><ellipse cx="1059.6" cy="532.5" rx="11.0" ry="10.3"/><ellipse cx="1093.6" cy="532.8" rx="11.0" ry="10.3"/><ellipse cx="1127.6" cy="533.0" rx="11.0" ry="10.3"/><ellipse cx="1161.6" cy="533.2" rx="11.0" ry="10.3"/><ellipse cx="1195.6" cy="533.5" rx="11.0" ry="10.3"/><ellipse cx="1229.6" cy="533.7" rx="11.1" ry="10.3"/><ellipse cx="450.1" cy="560.7" rx="10.9" ry="10.1"/><ellipse cx="483.7" cy="560.9" rx="10.9" ry="10.1"/><ellipse cx="517.4" cy="561.1" rx="10.9" ry="10.1"/><ellipse cx="551.1" cy="561.4" rx="10.9" ry="10.1"/><ellipse cx="584.8" cy="561.6" rx="10.9" ry="10.1"/><ellipse cx="618.5" cy="561.8" rx="11.0" ry="10.1"/><ellipse cx="652.2" cy="562.0" rx="11.0" ry="10.1"/><ellipse cx="685.9" cy="562.3" rx="11.0" ry="10.1"/><ellipse cx="719.6" cy="562.5" rx="11.0" ry="10.1"/><ellipse cx="753.3" cy="562.7" rx="11.0" ry="10.1"/><ellipse cx="787.0" cy="563.0" rx="11.0" ry="10.1"/><ellipse cx="820.8" cy="563.2" rx="11.0" ry="10.1"/><ellipse cx="854.5" cy="563.4" rx="11.0" ry="10.1"/><ellipse cx="888.2" cy="563.6" rx="11.0" ry="10.1"/><ellipse cx="922.0" cy="563.9" rx="11.0" ry="10.1"/><ellipse cx="955.7" cy="564.1" rx="11.0" ry="10.1"/><ellipse cx="989.5" cy="564.3" rx="11.0" ry="10.1"/><ellipse cx="1023.3" cy="564.6" rx="11.0" ry="10.1"/><ellipse cx="1057.0" cy="564.8" rx="11.0" ry="10.1"/><ellipse cx="1090.8" cy="565.0" rx="11.0" ry="10.1"/><ellipse cx="1124.6" cy="565.3" rx="11.0" ry="10.1"/><ellipse cx="1158.4" cy="565.5" rx="11.0" ry="10.2"/><ellipse cx="1192.2" cy="565.7" rx="11.0" ry="10.2"/><ellipse cx="1226.0" cy="565.9" rx="11.0" ry="10.2"/><ellipse cx="451.0" cy="592.5" rx="10.9" ry="10.0"/><ellipse cx="484.5" cy="592.7" rx="10.9" ry="10.0"/><ellipse cx="518.0" cy="593.0" rx="10.9" ry="10.0"/><ellipse cx="551.5" cy="593.2" rx="10.9" ry="10.0"/><ellipse cx="584.9" cy="593.4" rx="10.9" ry="10.0"/><ellipse cx="618.4" cy="593.7" rx="10.9" ry="10.0"/><ellipse cx="651.9" cy="593.9" rx="10.9" ry="10.0"/><ellipse cx="685.5" cy="594.1" rx="10.9" ry="10.0"/><ellipse cx="719.0" cy="594.4" rx="10.9" ry="10.0"/><ellipse cx="752.5" cy="594.6" rx="10.9" ry="10.0"/><ellipse cx="786.0" cy="594.8" rx="10.9" ry="10.0"/><ellipse cx="819.5" cy="595.0" rx="10.9" ry="10.0"/><ellipse cx="853.1" cy="595.3" rx="10.9" ry="10.0"/><ellipse cx="886.6" cy="595.5" rx="10.9" ry="10.0"/><ellipse cx="920.2" cy="595.7" rx="10.9" ry="10.0"/><ellipse cx="953.7" cy="596.0" rx="10.9" ry="10.0"/><ellipse cx="987.3" cy="596.2" rx="10.9" ry="10.0"/><ellipse cx="1020.9" cy="596.4" rx="10.9" ry="10.0"/><ellipse cx="1054.4" cy="596.7" rx="10.9" ry="10.0"/><ellipse cx="1088.0" cy="596.9" rx="10.9" ry="10.0"/><ellipse cx="1121.6" cy="597.1" rx="10.9" ry="10.0"/><ellipse cx="1155.2" cy="597.4" rx="10.9" ry="10.0"/><ellipse cx="1188.8" cy="597.6" rx="10.9" ry="10.0"/><ellipse cx="1222.4" cy="597.8" rx="10.9" ry="10.0"/><ellipse cx="451.9" cy="624.0" rx="10.8" ry="9.9"/><ellipse cx="485.2" cy="624.2" rx="10.8" ry="9.9"/><ellipse cx="518.5" cy="624.5" rx="10.8" ry="9.9"/><ellipse cx="551.8" cy="624.7" rx="10.8" ry="9.9"/><ellipse cx="585.1" cy="624.9" rx="10.8" ry="9.9"/><ellipse cx="618.4" cy="625.2" rx="10.8" ry="9.9"/><ellipse cx="651.7" cy="625.4" rx="10.8" ry="9.9"/><ellipse cx="685.0" cy="625.6" rx="10.8" ry="9.9"/><ellipse cx="718.4" cy="625.8" rx="10.8" ry="9.9"/><ellipse cx="751.7" cy="626.1" rx="10.8" ry="9.9"/><ellipse cx="785.0" cy="626.3" rx="10.8" ry="9.9"/><ellipse cx="818.3" cy="626.5" rx="10.8" ry="9.9"/><ellipse cx="851.7" cy="626.8" rx="10.8" ry="9.9"/><ellipse cx="885.0" cy="627.0" rx="10.8" ry="9.9"/><ellipse cx="918.4" cy="627.2" rx="10.8" ry="9.9"/><ellipse cx="951.8" cy="627.5" rx="10.8" ry="9.9"/><ellipse cx="985.1" cy="627.7" rx="10.8" ry="9.9"/><ellipse cx="1018.5" cy="627.9" rx="10.8" ry="9.9"/><ellipse cx="1051.9" cy="628.2" rx="10.8" ry="9.9"/><ellipse cx="1085.3" cy="628.4" rx="10.9" ry="9.9"/><ellipse cx="1118.6" cy="628.6" rx="10.9" ry="9.9"/><ellipse cx="1152.0" cy="628.9" rx="10.9" ry="9.9"/><ellipse cx="1185.4" cy="629.1" rx="10.9" ry="9.9"/><ellipse cx="1218.8" cy="629.3" rx="10.9" ry="9.9"/><ellipse cx="452.9" cy="655.1" rx="10.8" ry="9.7"/><ellipse cx="486.0" cy="655.3" rx="10.8" ry="9.7"/><ellipse cx="519.1" cy="655.6" rx="10.8" ry="9.7"/><ellipse cx="552.2" cy="655.8" rx="10.8" ry="9.7"/><ellipse cx="585.3" cy="656.0" rx="10.8" ry="9.7"/><ellipse cx="618.4" cy="656.3" rx="10.8" ry="9.7"/><ellipse cx="651.5" cy="656.5" rx="10.8" ry="9.7"/><ellipse cx="684.6" cy="656.7" rx="10.8" ry="9.7"/><ellipse cx="717.7" cy="657.0" rx="10.8" ry="9.8"/><ellipse cx="750.9" cy="657.2" rx="10.8" ry="9.8"/><ellipse cx="784.0" cy="657.4" rx="10.8" ry="9.8"/><ellipse cx="817.2" cy="657.7" rx="10.8" ry="9.8"/><ellipse cx="850.3" cy="657.9" rx="10.8" ry="9.8"/><ellipse cx="883.5" cy="658.1" rx="10.8" ry="9.8"/><ellipse cx="916.6" cy="658.4" rx="10.8" ry="9.8"/><ellipse cx="949.8" cy="658.6" rx="10.8" ry="9.8"/><ellipse cx="983.0" cy="658.8" rx="10.8" ry="9.8"/><ellipse cx="1016.2" cy="659.1" rx="10.8" ry="9.8"/><ellipse cx="1049.3" cy="659.3" rx="10.8" ry="9.8"/><ellipse cx="1082.5" cy="659.5" rx="10.8" ry="9.8"/><ellipse cx="1115.7" cy="659.8" rx="10.8" ry="9.8"/><ellipse cx="1148.9" cy="660.0" rx="10.8" ry="9.8"/><ellipse cx="1182.1" cy="660.2" rx="10.8" ry="9.8"/><ellipse cx="1215.4" cy="660.5" rx="10.8" ry="9.8"/><ellipse cx="453.8" cy="685.9" rx="10.7" ry="9.6"/><ellipse cx="486.7" cy="686.1" rx="10.7" ry="9.6"/><ellipse cx="519.6" cy="686.3" rx="10.7" ry="9.6"/><ellipse cx="552.5" cy="686.6" rx="10.7" ry="9.6"/><ellipse cx="585.4" cy="686.8" rx="10.7" ry="9.6"/><ellipse cx="618.3" cy="687.0" rx="10.7" ry="9.6"/><ellipse cx="651.3" cy="687.3" rx="10.7" ry="9.6"/><ellipse cx="684.2" cy="687.5" rx="10.7" ry="9.6"/><ellipse cx="717.1" cy="687.7" rx="10.7" ry="9.6"/><ellipse cx="750.1" cy="688.0" rx="10.7" ry="9.6"/><ellipse cx="783.0" cy="688.2" rx="10.7" ry="9.6"/><ellipse cx="816.0" cy="688.5" rx="10.7" ry="9.6"/><ellipse cx="849.0" cy="688.7" rx="10.7" ry="9.6"/><ellipse cx="881.9" cy="688.9" rx="10.7" ry="9.7"/><ellipse cx="914.9" cy="689.2" rx="10.7" ry="9.7"/><ellipse cx="947.9" cy="689.4" rx="10.7" ry="9.7"/><ellipse cx="980.9" cy="689.6" rx="10.7" ry="9.7"/><ellipse cx="1013.8" cy="689.9" rx="10.7" ry="9.7"/><ellipse cx="1046.8" cy="690.1" rx="10.7" ry="9.7"/><ellipse cx="1079.8" cy="690.3" rx="10.7" ry="9.7"/><ellipse cx="1112.9" cy="690.6" rx="10.7" ry="9.7"/><ellipse cx="1145.9" cy="690.8" rx="10.7" ry="9.7"/><ellipse cx="1178.9" cy="691.0" rx="10.7" ry="9.7"/><ellipse cx="1211.9" cy="691.3" rx="10.7" ry="9.7"/><ellipse cx="454.7" cy="716.3" rx="10.6" ry="9.5"/><ellipse cx="487.4" cy="716.5" rx="10.6" ry="9.5"/><ellipse cx="520.1" cy="716.8" rx="10.6" ry="9.5"/><ellipse cx="552.8" cy="717.0" rx="10.6" ry="9.5"/><ellipse cx="585.6" cy="717.2" rx="10.6" ry="9.5"/><ellipse cx="618.3" cy="717.5" rx="10.6" ry="9.5"/><ellipse cx="651.0" cy="717.7" rx="10.6" ry="9.5"/><ellipse cx="683.8" cy="717.9" rx="10.6" ry="9.5"/><ellipse cx="716.5" cy="718.2" rx="10.6" ry="9.5"/><ellipse cx="749.3" cy="718.4" rx="10.6" ry="9.5"/><ellipse cx="782.1" cy="718.6" rx="10.6" ry="9.5"/><ellipse cx="814.8" cy="718.9" rx="10.7" ry="9.5"/><ellipse cx="847.6" cy="719.1" rx="10.7" ry="9.5"/><ellipse cx="880.4" cy="719.3" rx="10.7" ry="9.5"/><ellipse cx="913.2" cy="719.6" rx="10.7" ry="9.5"/><ellipse cx="946.0" cy="719.8" rx="10.7" ry="9.5"/><ellipse cx="978.8" cy="720.1" rx="10.7" ry="9.6"/><ellipse cx="1011.6" cy="720.3" rx="10.7" ry="9.6"/><ellipse cx="1044.4" cy="720.5" rx="10.7" ry="9.6"/><ellipse cx="1077.2" cy="720.8" rx="10.7" ry="9.6"/><ellipse cx="1110.0" cy="721.0" rx="10.7" ry="9.6"/><ellipse cx="1142.8" cy="721.2" rx="10.7" ry="9.6"/><ellipse cx="1175.7" cy="721.5" rx="10.7" ry="9.6"/><ellipse cx="1208.5" cy="721.7" rx="10.7" ry="9.6"/><ellipse cx="455.6" cy="746.3" rx="10.6" ry="9.4"/><ellipse cx="488.1" cy="746.6" rx="10.6" ry="9.4"/><ellipse cx="520.6" cy="746.8" rx="10.6" ry="9.4"/><ellipse cx="553.2" cy="747.1" rx="10.6" ry="9.4"/><ellipse cx="585.7" cy="747.3" rx="10.6" ry="9.4"/><ellipse cx="618.3" cy="747.5" rx="10.6" ry="9.4"/><ellipse cx="650.8" cy="747.8" rx="10.6" ry="9.4"/><ellipse cx="683.4" cy="748.0" rx="10.6" ry="9.4"/><ellipse cx="716.0" cy="748.2" rx="10.6" ry="9.4"/><ellipse cx="748.5" cy="748.5" rx="10.6" ry="9.4"/><ellipse cx="781.1" cy="748.7" rx="10.6" ry="9.4"/><ellipse cx="813.7" cy="749.0" rx="10.6" ry="9.4"/><ellipse cx="846.3" cy="749.2" rx="10.6" ry="9.4"/><ellipse cx="878.9" cy="749.4" rx="10.6" ry="9.4"/><ellipse cx="911.5" cy="749.7" rx="10.6" ry="9.4"/><ellipse cx="944.1" cy="749.9" rx="10.6" ry="9.4"/><ellipse cx="976.7" cy="750.1" rx="10.6" ry="9.4"/><ellipse cx="1009.3" cy="750.4" rx="10.6" ry="9.5"/><ellipse cx="1041.9" cy="750.6" rx="10.6" ry="9.5"/><ellipse cx="1074.6" cy="750.9" rx="10.6" ry="9.5"/><ellipse cx="1107.2" cy="751.1" rx="10.6" ry="9.5"/><ellipse cx="1139.8" cy="751.3" rx="10.6" ry="9.5"/><ellipse cx="1172.5" cy="751.6" rx="10.6" ry="9.5"/><ellipse cx="1205.1" cy="751.8" rx="10.6" ry="9.5"/><ellipse cx="456.5" cy="776.1" rx="10.5" ry="9.3"/><ellipse cx="488.8" cy="776.3" rx="10.5" ry="9.3"/><ellipse cx="521.2" cy="776.6" rx="10.5" ry="9.3"/><ellipse cx="553.5" cy="776.8" rx="10.5" ry="9.3"/><ellipse cx="585.9" cy="777.0" rx="10.5" ry="9.3"/><ellipse cx="618.2" cy="777.3" rx="10.5" ry="9.3"/><ellipse cx="650.6" cy="777.5" rx="10.5" ry="9.3"/><ellipse cx="683.0" cy="777.7" rx="10.5" ry="9.3"/><ellipse cx="715.4" cy="778.0" rx="10.5" ry="9.3"/><ellipse cx="747.8" cy="778.2" rx="10.5" ry="9.3"/><ellipse cx="780.2" cy="778.5" rx="10.5" ry="9.3"/><ellipse cx="812.6" cy="778.7" rx="10.5" ry="9.3"/><ellipse cx="845.0" cy="778.9" rx="10.5" ry="9.3"/><ellipse cx="877.4" cy="779.2" rx="10.5" ry="9.3"/><ellipse cx="909.8" cy="779.4" rx="10.5" ry="9.3"/><ellipse cx="942.2" cy="779.7" rx="10.5" ry="9.3"/><ellipse cx="974.6" cy="779.9" rx="10.5" ry="9.3"/><ellipse cx="1007.1" cy="780.1" rx="10.5" ry="9.3"/><ellipse cx="1039.5" cy="780.4" rx="10.5" ry="9.3"/><ellipse cx="1072.0" cy="780.6" rx="10.5" ry="9.4"/><ellipse cx="1104.4" cy="780.8" rx="10.5" ry="9.4"/><ellipse cx="1136.9" cy="781.1" rx="10.5" ry="9.4"/><ellipse cx="1169.3" cy="781.3" rx="10.6" ry="9.4"/><ellipse cx="1201.8" cy="781.6" rx="10.6" ry="9.4"/><ellipse cx="457.3" cy="805.5" rx="10.5" ry="9.2"/><ellipse cx="489.5" cy="805.7" rx="10.5" ry="9.2"/><ellipse cx="521.7" cy="806.0" rx="10.5" ry="9.2"/><ellipse cx="553.8" cy="806.2" rx="10.5" ry="9.2"/><ellipse cx="586.0" cy="806.4" rx="10.5" ry="9.2"/><ellipse cx="618.2" cy="806.7" rx="10.5" ry="9.2"/><ellipse cx="650.4" cy="806.9" rx="10.5" ry="9.2"/><ellipse cx="682.6" cy="807.1" rx="10.5" ry="9.2"/><ellipse cx="714.8" cy="807.4" rx="10.5" ry="9.2"/><ellipse cx="747.0" cy="807.6" rx="10.5" ry="9.2"/><ellipse cx="779.2" cy="807.9" rx="10.5" ry="9.2"/><ellipse cx="811.4" cy="808.1" rx="10.5" ry="9.2"/><ellipse cx="843.7" cy="808.3" rx="10.5" ry="9.2"/><ellipse cx="875.9" cy="808.6" rx="10.5" ry="9.2"/><ellipse cx="908.1" cy="808.8" rx="10.5" ry="9.2"/><ellipse cx="940.4" cy="809.1" rx="10.5" ry="9.2"/><ellipse cx="972.6" cy="809.3" rx="10.5" ry="9.2"/><ellipse cx="1004.9" cy="809.5" rx="10.5" ry="9.2"/><ellipse cx="1037.1" cy="809.8" rx="10.5" ry="9.2"/><ellipse cx="1069.4" cy="810.0" rx="10.5" ry="9.3"/></g>
<g shape-rendering="geometricPrecision"><circle cx="846" cy="750" r="3.8" fill="#f4f4f4"/><circle cx="879.5" cy="750.5" r="2.6" fill="#bdbdbd"/></g>
<path d="M470 29h2v5h5v2h-5v5h-2v-5h-5v-2h5z" fill="#f5a300"/><path d="M507 29h2v5h5v2h-5v5h-2v-5h-5v-2h5z" fill="#35d835"/><path d="M544 29h2v5h5v2h-5v5h-2v-5h-5v-2h5z" fill="#35d835"/><path d="M581 29h2v5h5v2h-5v5h-2v-5h-5v-2h5z" fill="#35d835"/><path d="M618 30h2v5h5v2h-5v5h-2v-5h-5v-2h5z" fill="#35d835"/><path d="M655 30h2v5h5v2h-5v5h-2v-5h-5v-2h5z" fill="#35d835"/><path d="M692 30h2v5h5v2h-5v5h-2v-5h-5v-2h5z" fill="#35d835"/><path d="M729 30h2v5h5v2h-5v5h-2v-5h-5v-2h5z" fill="#35d835"/><path d="M766 30h2v5h5v2h-5v5h-2v-5h-5v-2h5z" fill="#35d835"/><path d="M803 31h2v5h5v2h-5v5h-2v-5h-5v-2h5z" fill="#35d835"/><path d="M840 31h2v5h5v2h-5v5h-2v-5h-5v-2h5z" fill="#35d835"/><path d="M877 31h2v5h5v2h-5v5h-2v-5h-5v-2h5z" fill="#35d835"/><path d="M914 31h2v5h5v2h-5v5h-2v-5h-5v-2h5z" fill="#35d835"/><path d="M951 31h2v5h5v2h-5v5h-2v-5h-5v-2h5z" fill="#35d835"/><path d="M988 32h2v5h5v2h-5v5h-2v-5h-5v-2h5z" fill="#35d835"/><path d="M1025 32h2v5h5v2h-5v5h-2v-5h-5v-2h5z" fill="#35d835"/><path d="M1062 32h2v5h5v2h-5v5h-2v-5h-5v-2h5z" fill="#35d835"/><path d="M1099 32h2v5h5v2h-5v5h-2v-5h-5v-2h5z" fill="#35d835"/><path d="M1136 32h2v5h5v2h-5v5h-2v-5h-5v-2h5z" fill="#35d835"/><path d="M1173 33h2v5h5v2h-5v5h-2v-5h-5v-2h5z" fill="#35d835"/><path d="M471 66h2v5h5v2h-5v5h-2v-5h-5v-2h5z" fill="#35d835"/><path d="M508 67h2v5h5v2h-5v5h-2v-5h-5v-2h5z" fill="#35d835"/><path d="M545 67h2v5h5v2h-5v5h-2v-5h-5v-2h5z" fill="#35d835"/><path d="M581 67h2v5h5v2h-5v5h-2v-5h-5v-2h5z" fill="#35d835"/><path d="M618 67h2v5h5v2h-5v5h-2v-5h-5v-2h5z" fill="#35d835"/><path d="M655 67h2v5h5v2h-5v5h-2v-5h-5v-2h5z" fill="#35d835"/><path d="M691 68h2v5h5v2h-5v5h-2v-5h-5v-2h5z" fill="#35d835"/><path d="M728 68h2v5h5v2h-5v5h-2v-5h-5v-2h5z" fill="#35d835"/><path d="M765 68h2v5h5v2h-5v5h-2v-5h-5v-2h5z" fill="#35d835"/><path d="M802 68h2v5h5v2h-5v5h-2v-5h-5v-2h5z" fill="#35d835"/><path d="M838 68h2v5h5v2h-5v5h-2v-5h-5v-2h5z" fill="#35d835"/><path d="M875 69h2v5h5v2h-5v5h-2v-5h-5v-2h5z" fill="#35d835"/><path d="M912 69h2v5h5v2h-5v5h-2v-5h-5v-2h5z" fill="#35d835"/><path d="M949 69h2v5h5v2h-5v5h-2v-5h-5v-2h5z" fill="#35d835"/><path d="M985 69h2v5h5v2h-5v5h-2v-5h-5v-2h5z" fill="#35d835"/><path d="M1022 69h2v5h5v2h-5v5h-2v-5h-5v-2h5z" fill="#35d835"/><path d="M1059 70h2v5h5v2h-5v5h-2v-5h-5v-2h5z" fill="#35d835"/><path d="M1096 70h2v5h5v2h-5v5h-2v-5h-5v-2h5z" fill="#35d835"/><path d="M1133 70h2v5h5v2h-5v5h-2v-5h-5v-2h5z" fill="#35d835"/><path d="M1169 70h2v5h5v2h-5v5h-2v-5h-5v-2h5z" fill="#35d835"/><path d="M1206 70h2v5h5v2h-5v5h-2v-5h-5v-2h5z" fill="#35d835"/><path d="M472 104h2v5h5v2h-5v5h-2v-5h-5v-2h5z" fill="#35d835"/><path d="M509 104h2v5h5v2h-5v5h-2v-5h-5v-2h5z" fill="#35d835"/><path d="M545 105h2v5h5v2h-5v5h-2v-5h-5v-2h5z" fill="#35d835"/><path d="M581 105h2v5h5v2h-5v5h-2v-5h-5v-2h5z" fill="#35d835"/><path d="M618 105h2v5h5v2h-5v5h-2v-5h-5v-2h5z" fill="#35d835"/><path d="M654 105h2v5h5v2h-5v5h-2v-5h-5v-2h5z" fill="#35d835"/><path d="M691 105h2v5h5v2h-5v5h-2v-5h-5v-2h5z" fill="#35d835"/><path d="M727 106h2v5h5v2h-5v5h-2v-5h-5v-2h5z" fill="#35d835"/><path d="M764 106h2v5h5v2h-5v5h-2v-5h-5v-2h5z" fill="#35d835"/><path d="M800 106h2v5h5v2h-5v5h-2v-5h-5v-2h5z" fill="#35d835"/><path d="M837 106h2v5h5v2h-5v5h-2v-5h-5v-2h5z" fill="#35d835"/><path d="M873 106h2v5h5v2h-5v5h-2v-5h-5v-2h5z" fill="#35d835"/><path d="M910 107h2v5h5v2h-5v5h-2v-5h-5v-2h5z" fill="#35d835"/><path d="M946 107h2v5h5v2h-5v5h-2v-5h-5v-2h5z" fill="#35d835"/><path d="M983 107h2v5h5v2h-5v5h-2v-5h-5v-2h5z" fill="#35d835"/><path d="M1020 107h2v5h5v2h-5v5h-2v-5h-5v-2h5z" fill="#35d835"/><path d="M1056 107h2v5h5v2h-5v5h-2v-5h-5v-2h5z" fill="#35d835"/><path d="M1093 108h2v5h5v2h-5v5h-2v-5h-5v-2h5z" fill="#35d835"/><path d="M1129 108h2v5h5v2h-5v5h-2v-5h-5v-2h5z" fill="#35d835"/><path d="M1166 108h2v5h5v2h-5v5h-2v-5h-5v-2h5z" fill="#35d835"/><path d="M1202 108h2v5h5v2h-5v5h-2v-5h-5v-2h5z" fill="#35d835"/><path d="M473 141h2v5h5v2h-5v5h-2v-5h-5v-2h5z" fill="#35d835"/><path d="M509 142h2v5h5v2h-5v5h-2v-5h-5v-2h5z" fill="#35d835"/><path d="M545 142h2v5h5v2h-5v5h-2v-5h-5v-2h5z" fill="#35d835"/><path d="M582 142h2v5h5v2h-5v5h-2v-5h-5v-2h5z" fill="#35d835"/><path d="M618 142h2v5h5v2h-5v5h-2v-5h-5v-2h5z" fill="#35d835"/><path d="M654 142h2v5h5v2h-5v5h-2v-5h-5v-2h5z" fill="#35d835"/><path d="M690 143h2v5h5v2h-5v5h-2v-5h-5v-2h5z" fill="#35d835"/><path d="M727 143h2v5h5v2h-5v5h-2v-5h-5v-2h5z" fill="#35d835"/><path d="M763 143h2v5h5v2h-5v5h-2v-5h-5v-2h5z" fill="#35d835"/><path d="M799 143h2v5h5v2h-5v5h-2v-5h-5v-2h5z" fill="#35d835"/><path d="M835 144h2v5h5v2h-5v5h-2v-5h-5v-2h5z" fill="#35d835"/><path d="M872 144h2v5h5v2h-5v5h-2v-5h-5v-2h5z" fill="#35d835"/><path d="M908 144h2v5h5v2h-5v5h-2v-5h-5v-2h5z" fill="#35d835"/><path d="M944 144h2v5h5v2h-5v5h-2v-5h-5v-2h5z" fill="#35d835"/><path d="M981 144h2v5h5v2h-5v5h-2v-5h-5v-2h5z" fill="#35d835"/><path d="M1017 145h2v5h5v2h-5v5h-2v-5h-5v-2h5z" fill="#35d835"/><path d="M1053 145h2v5h5v2h-5v5h-2v-5h-5v-2h5z" fill="#35d835"/><path d="M1090 145h2v5h5v2h-5v5h-2v-5h-5v-2h5z" fill="#35d835"/><path d="M1126 145h2v5h5v2h-5v5h-2v-5h-5v-2h5z" fill="#35d835"/><path d="M1162 145h2v5h5v2h-5v5h-2v-5h-5v-2h5z" fill="#35d835"/><path d="M1199 146h2v5h5v2h-5v5h-2v-5h-5v-2h5z" fill="#35d835"/><path d="M474 178h2v5h5v2h-5v5h-2v-5h-5v-2h5z" fill="#35d835"/><path d="M510 178h2v5h5v2h-5v5h-2v-5h-5v-2h5z" fill="#35d835"/><path d="M546 179h2v5h5v2h-5v5h-2v-5h-5v-2h5z" fill="#35d835"/><path d="M582 179h2v5h5v2h-5v5h-2v-5h-5v-2h5z" fill="#35d835"/><path d="M618 179h2v5h5v2h-5v5h-2v-5h-5v-2h5z" fill="#35d835"/><path d="M654 179h2v5h5v2h-5v5h-2v-5h-5v-2h5z" fill="#35d835"/><path d="M690 180h2v5h5v2h-5v5h-2v-5h-5v-2h5z" fill="#35d835"/><path d="M726 180h2v5h5v2h-5v5h-2v-5h-5v-2h5z" fill="#35d835"/><path d="M762 180h2v5h5v2h-5v5h-2v-5h-5v-2h5z" fill="#35d835"/><path d="M798 180h2v5h5v2h-5v5h-2v-5h-5v-2h5z" fill="#35d835"/><path d="M834 180h2v5h5v2h-5v5h-2v-5h-5v-2h5z" fill="#35d835"/><path d="M870 181h2v5h5v2h-5v5h-2v-5h-5v-2h5z" fill="#35d835"/><path d="M906 181h2v5h5v2h-5v5h-2v-5h-5v-2h5z" fill="#35d835"/><path d="M942 181h2v5h5v2h-5v5h-2v-5h-5v-2h5z" fill="#35d835"/><path d="M978 181h2v5h5v2h-5v5h-2v-5h-5v-2h5z" fill="#35d835"/><path d="M1014 181h2v5h5v2h-5v5h-2v-5h-5v-2h5z" fill="#35d835"/><path d="M1051 182h2v5h5v2h-5v5h-2v-5h-5v-2h5z" fill="#35d835"/><path d="M1087 182h2v5h5v2h-5v5h-2v-5h-5v-2h5z" fill="#35d835"/><path d="M1123 182h2v5h5v2h-5v5h-2v-5h-5v-2h5z" fill="#35d835"/><path d="M1159 182h2v5h5v2h-5v5h-2v-5h-5v-2h5z" fill="#35d835"/><path d="M1195 182h2v5h5v2h-5v5h-2v-5h-5v-2h5z" fill="#35d835"/><path d="M475 215h2v5h5v2h-5v5h-2v-5h-5v-2h5z" fill="#35d835"/><path d="M511 215h2v5h5v2h-5v5h-2v-5h-5v-2h5z" fill="#35d835"/><path d="M546 215h2v5h5v2h-5v5h-2v-5h-5v-2h5z" fill="#35d835"/><path d="M582 215h2v5h5v2h-5v5h-2v-5h-5v-2h5z" fill="#35d835"/><path d="M618 215h2v5h5v2h-5v5h-2v-5h-5v-2h5z" fill="#35d835"/><path d="M654 216h2v5h5v2h-5v5h-2v-5h-5v-2h5z" fill="#35d835"/><path d="M689 216h2v5h5v2h-5v5h-2v-5h-5v-2h5z" fill="#35d835"/><path d="M725 216h2v5h5v2h-5v5h-2v-5h-5v-2h5z" fill="#35d835"/><path d="M761 216h2v5h5v2h-5v5h-2v-5h-5v-2h5z" fill="#35d835"/><path d="M797 217h2v5h5v2h-5v5h-2v-5h-5v-2h5z" fill="#35d835"/><path d="M833 217h2v5h5v2h-5v5h-2v-5h-5v-2h5z" fill="#35d835"/><path d="M869 217h2v5h5v2h-5v5h-2v-5h-5v-2h5z" fill="#35d835"/><path d="M904 217h2v5h5v2h-5v5h-2v-5h-5v-2h5z" fill="#35d835"/><path d="M940 217h2v5h5v2h-5v5h-2v-5h-5v-2h5z" fill="#35d835"/><path d="M976 218h2v5h5v2h-5v5h-2v-5h-5v-2h5z" fill="#35d835"/><path d="M1012 218h2v5h5v2h-5v5h-2v-5h-5v-2h5z" fill="#35d835"/><path d="M1048 218h2v5h5v2h-5v5h-2v-5h-5v-2h5z" fill="#35d835"/><path d="M1084 218h2v5h5v2h-5v5h-2v-5h-5v-2h5z" fill="#35d835"/><path d="M1120 218h2v5h5v2h-5v5h-2v-5h-5v-2h5z" fill="#35d835"/><path d="M1155 219h2v5h5v2h-5v5h-2v-5h-5v-2h5z" fill="#35d835"/><path d="M1191 219h2v5h5v2h-5v5h-2v-5h-5v-2h5z" fill="#35d835"/><path d="M476 251h2v5h5v2h-5v5h-2v-5h-5v-2h5z" fill="#35d835"/><path d="M511 251h2v5h5v2h-5v5h-2v-5h-5v-2h5z" fill="#35d835"/><path d="M547 251h2v5h5v2h-5v5h-2v-5h-5v-2h5z" fill="#35d835"/><path d="M582 251h2v5h5v2h-5v5h-2v-5h-5v-2h5z" fill="#35d835"/><path d="M618 251h2v5h5v2h-5v5h-2v-5h-5v-2h5z" fill="#35d835"/><path d="M653 252h2v5h5v2h-5v5h-2v-5h-5v-2h5z" fill="#35d835"/><path d="M689 252h2v5h5v2h-5v5h-2v-5h-5v-2h5z" fill="#35d835"/><path d="M725 252h2v5h5v2h-5v5h-2v-5h-5v-2h5z" fill="#35d835"/><path d="M760 252h2v5h5v2h-5v5h-2v-5h-5v-2h5z" fill="#35d835"/><path d="M796 252h2v5h5v2h-5v5h-2v-5h-5v-2h5z" fill="#35d835"/><path d="M831 253h2v5h5v2h-5v5h-2v-5h-5v-2h5z" fill="#35d835"/><path d="M867 253h2v5h5v2h-5v5h-2v-5h-5v-2h5z" fill="#35d835"/><path d="M903 253h2v5h5v2h-5v5h-2v-5h-5v-2h5z" fill="#35d835"/><path d="M938 253h2v5h5v2h-5v5h-2v-5h-5v-2h5z" fill="#35d835"/><path d="M974 254h2v5h5v2h-5v5h-2v-5h-5v-2h5z" fill="#35d835"/><path d="M1009 254h2v5h5v2h-5v5h-2v-5h-5v-2h5z" fill="#35d835"/><path d="M1045 254h2v5h5v2h-5v5h-2v-5h-5v-2h5z" fill="#35d835"/><path d="M1081 254h2v5h5v2h-5v5h-2v-5h-5v-2h5z" fill="#35d835"/><path d="M1116 254h2v5h5v2h-5v5h-2v-5h-5v-2h5z" fill="#35d835"/><path d="M1152 255h2v5h5v2h-5v5h-2v-5h-5v-2h5z" fill="#35d835"/><path d="M1188 255h2v5h5v2h-5v5h-2v-5h-5v-2h5z" fill="#35d835"/><path d="M476 286h2v5h5v2h-5v5h-2v-5h-5v-2h5z" fill="#35d835"/><path d="M512 286h2v5h5v2h-5v5h-2v-5h-5v-2h5z" fill="#35d835"/><path d="M547 286h2v5h5v2h-5v5h-2v-5h-5v-2h5z" fill="#35d835"/><path d="M582 287h2v5h5v2h-5v5h-2v-5h-5v-2h5z" fill="#35d835"/><path d="M618 287h2v5h5v2h-5v5h-2v-5h-5v-2h5z" fill="#35d835"/><path d="M653 287h2v5h5v2h-5v5h-2v-5h-5v-2h5z" fill="#35d835"/><path d="M688 287h2v5h5v2h-5v5h-2v-5h-5v-2h5z" fill="#35d835"/><path d="M724 288h2v5h5v2h-5v5h-2v-5h-5v-2h5z" fill="#35d835"/><path d="M759 288h2v5h5v2h-5v5h-2v-5h-5v-2h5z" fill="#35d835"/><path d="M795 288h2v5h5v2h-5v5h-2v-5h-5v-2h5z" fill="#35d835"/><path d="M830 288h2v5h5v2h-5v5h-2v-5h-5v-2h5z" fill="#35d835"/><path d="M865 288h2v5h5v2h-5v5h-2v-5h-5v-2h5z" fill="#35d835"/><path d="M901 289h2v5h5v2h-5v5h-2v-5h-5v-2h5z" fill="#35d835"/><path d="M936 289h2v5h5v2h-5v5h-2v-5h-5v-2h5z" fill="#35d835"/><path d="M972 289h2v5h5v2h-5v5h-2v-5h-5v-2h5z" fill="#35d835"/><path d="M1007 289h2v5h5v2h-5v5h-2v-5h-5v-2h5z" fill="#35d835"/><path d="M1042 289h2v5h5v2h-5v5h-2v-5h-5v-2h5z" fill="#35d835"/><path d="M1078 290h2v5h5v2h-5v5h-2v-5h-5v-2h5z" fill="#35d835"/><path d="M1113 290h2v5h5v2h-5v5h-2v-5h-5v-2h5z" fill="#35d835"/><path d="M1149 290h2v5h5v2h-5v5h-2v-5h-5v-2h5z" fill="#35d835"/><path d="M1184 290h2v5h5v2h-5v5h-2v-5h-5v-2h5z" fill="#35d835"/><path d="M477 321h2v5h5v2h-5v5h-2v-5h-5v-2h5z" fill="#35d835"/><path d="M512 321h2v5h5v2h-5v5h-2v-5h-5v-2h5z" fill="#35d835"/><path d="M547 322h2v5h5v2h-5v5h-2v-5h-5v-2h5z" fill="#35d835"/><path d="M583 322h2v5h5v2h-5v5h-2v-5h-5v-2h5z" fill="#35d835"/><path d="M618 322h2v5h5v2h-5v5h-2v-5h-5v-2h5z" fill="#35d835"/><path d="M653 322h2v5h5v2h-5v5h-2v-5h-5v-2h5z" fill="#35d835"/><path d="M688 322h2v5h5v2h-5v5h-2v-5h-5v-2h5z" fill="#35d835"/><path d="M723 323h2v5h5v2h-5v5h-2v-5h-5v-2h5z" fill="#35d835"/><path d="M758 323h2v5h5v2h-5v5h-2v-5h-5v-2h5z" fill="#35d835"/><path d="M793 323h2v5h5v2h-5v5h-2v-5h-5v-2h5z" fill="#35d835"/><path d="M829 323h2v5h5v2h-5v5h-2v-5h-5v-2h5z" fill="#35d835"/><path d="M864 323h2v5h5v2h-5v5h-2v-5h-5v-2h5z" fill="#35d835"/><path d="M899 324h2v5h5v2h-5v5h-2v-5h-5v-2h5z" fill="#35d835"/><path d="M934 324h2v5h5v2h-5v5h-2v-5h-5v-2h5z" fill="#35d835"/><path d="M969 324h2v5h5v2h-5v5h-2v-5h-5v-2h5z" fill="#35d835"/><path d="M1005 324h2v5h5v2h-5v5h-2v-5h-5v-2h5z" fill="#35d835"/><path d="M1040 325h2v5h5v2h-5v5h-2v-5h-5v-2h5z" fill="#35d835"/><path d="M1075 325h2v5h5v2h-5v5h-2v-5h-5v-2h5z" fill="#35d835"/><path d="M1110 325h2v5h5v2h-5v5h-2v-5h-5v-2h5z" fill="#35d835"/><path d="M1145 325h2v5h5v2h-5v5h-2v-5h-5v-2h5z" fill="#35d835"/><path d="M1181 325h2v5h5v2h-5v5h-2v-5h-5v-2h5z" fill="#35d835"/><path d="M478 356h2v5h5v2h-5v5h-2v-5h-5v-2h5z" fill="#35d835"/><path d="M513 356h2v5h5v2h-5v5h-2v-5h-5v-2h5z" fill="#35d835"/><path d="M548 356h2v5h5v2h-5v5h-2v-5h-5v-2h5z" fill="#35d835"/><path d="M583 356h2v5h5v2h-5v5h-2v-5h-5v-2h5z" fill="#35d835"/><path d="M618 357h2v5h5v2h-5v5h-2v-5h-5v-2h5z" fill="#35d835"/><path d="M653 357h2v5h5v2h-5v5h-2v-5h-5v-2h5z" fill="#35d835"/><path d="M688 357h2v5h5v2h-5v5h-2v-5h-5v-2h5z" fill="#35d835"/><path d="M722 357h2v5h5v2h-5v5h-2v-5h-5v-2h5z" fill="#35d835"/><path d="M757 357h2v5h5v2h-5v5h-2v-5h-5v-2h5z" fill="#35d835"/><path d="M792 358h2v5h5v2h-5v5h-2v-5h-5v-2h5z" fill="#35d835"/><path d="M827 358h2v5h5v2h-5v5h-2v-5h-5v-2h5z" fill="#35d835"/><path d="M862 358h2v5h5v2h-5v5h-2v-5h-5v-2h5z" fill="#35d835"/><path d="M897 358h2v5h5v2h-5v5h-2v-5h-5v-2h5z" fill="#35d835"/><path d="M932 359h2v5h5v2h-5v5h-2v-5h-5v-2h5z" fill="#35d835"/><path d="M967 359h2v5h5v2h-5v5h-2v-5h-5v-2h5z" fill="#35d835"/><path d="M1002 359h2v5h5v2h-5v5h-2v-5h-5v-2h5z" fill="#35d835"/><path d="M1037 359h2v5h5v2h-5v5h-2v-5h-5v-2h5z" fill="#35d835"/><path d="M1072 359h2v5h5v2h-5v5h-2v-5h-5v-2h5z" fill="#35d835"/><path d="M1107 360h2v5h5v2h-5v5h-2v-5h-5v-2h5z" fill="#35d835"/><path d="M1142 360h2v5h5v2h-5v5h-2v-5h-5v-2h5z" fill="#35d835"/><path d="M1177 360h2v5h5v2h-5v5h-2v-5h-5v-2h5z" fill="#35d835"/><path d="M479 390h2v5h5v2h-5v5h-2v-5h-5v-2h5z" fill="#35d835"/><path d="M514 390h2v5h5v2h-5v5h-2v-5h-5v-2h5z" fill="#35d835"/><path d="M548 390h2v5h5v2h-5v5h-2v-5h-5v-2h5z" fill="#35d835"/><path d="M583 391h2v5h5v2h-5v5h-2v-5h-5v-2h5z" fill="#35d835"/><path d="M618 391h2v5h5v2h-5v5h-2v-5h-5v-2h5z" fill="#35d835"/><path d="M652 391h2v5h5v2h-5v5h-2v-5h-5v-2h5z" fill="#35d835"/><path d="M687 391h2v5h5v2h-5v5h-2v-5h-5v-2h5z" fill="#35d835"/><path d="M722 391h2v5h5v2h-5v5h-2v-5h-5v-2h5z" fill="#35d835"/><path d="M757 392h2v5h5v2h-5v5h-2v-5h-5v-2h5z" fill="#35d835"/><path d="M791 392h2v5h5v2h-5v5h-2v-5h-5v-2h5z" fill="#35d835"/><path d="M826 392h2v5h5v2h-5v5h-2v-5h-5v-2h5z" fill="#35d835"/><path d="M861 392h2v5h5v2h-5v5h-2v-5h-5v-2h5z" fill="#35d835"/><path d="M896 393h2v5h5v2h-5v5h-2v-5h-5v-2h5z" fill="#35d835"/><path d="M930 393h2v5h5v2h-5v5h-2v-5h-5v-2h5z" fill="#35d835"/><path d="M965 393h2v5h5v2h-5v5h-2v-5h-5v-2h5z" fill="#35d835"/><path d="M1000 393h2v5h5v2h-5v5h-2v-5h-5v-2h5z" fill="#35d835"/><path d="M1035 393h2v5h5v2h-5v5h-2v-5h-5v-2h5z" fill="#35d835"/><path d="M1069 394h2v5h5v2h-5v5h-2v-5h-5v-2h5z" fill="#35d835"/><path d="M1104 394h2v5h5v2h-5v5h-2v-5h-5v-2h5z" fill="#35d835"/><path d="M1139 394h2v5h5v2h-5v5h-2v-5h-5v-2h5z" fill="#35d835"/><path d="M1174 394h2v5h5v2h-5v5h-2v-5h-5v-2h5z" fill="#35d835"/><path d="M480 424h2v5h5v2h-5v5h-2v-5h-5v-2h5z" fill="#35d835"/><path d="M514 424h2v5h5v2h-5v5h-2v-5h-5v-2h5z" fill="#35d835"/><path d="M549 424h2v5h5v2h-5v5h-2v-5h-5v-2h5z" fill="#35d835"/><path d="M583 424h2v5h5v2h-5v5h-2v-5h-5v-2h5z" fill="#35d835"/><path d="M618 425h2v5h5v2h-5v5h-2v-5h-5v-2h5z" fill="#35d835"/><path d="M652 425h2v5h5v2h-5v5h-2v-5h-5v-2h5z" fill="#35d835"/><path d="M687 425h2v5h5v2h-5v5h-2v-5h-5v-2h5z" fill="#35d835"/><path d="M721 425h2v5h5v2h-5v5h-2v-5h-5v-2h5z" fill="#35d835"/><path d="M756 425h2v5h5v2h-5v5h-2v-5h-5v-2h5z" fill="#35d835"/><path d="M790 426h2v5h5v2h-5v5h-2v-5h-5v-2h5z" fill="#35d835"/><path d="M825 426h2v5h5v2h-5v5h-2v-5h-5v-2h5z" fill="#35d835"/><path d="M859 426h2v5h5v2h-5v5h-2v-5h-5v-2h5z" fill="#35d835"/><path d="M894 426h2v5h5v2h-5v5h-2v-5h-5v-2h5z" fill="#35d835"/><path d="M928 427h2v5h5v2h-5v5h-2v-5h-5v-2h5z" fill="#35d835"/><path d="M963 427h2v5h5v2h-5v5h-2v-5h-5v-2h5z" fill="#35d835"/><path d="M998 427h2v5h5v2h-5v5h-2v-5h-5v-2h5z" fill="#35d835"/><path d="M1032 427h2v5h5v2h-5v5h-2v-5h-5v-2h5z" fill="#35d835"/><path d="M1067 427h2v5h5v2h-5v5h-2v-5h-5v-2h5z" fill="#35d835"/><path d="M1101 428h2v5h5v2h-5v5h-2v-5h-5v-2h5z" fill="#35d835"/><path d="M1136 428h2v5h5v2h-5v5h-2v-5h-5v-2h5z" fill="#35d835"/><path d="M1170 428h2v5h5v2h-5v5h-2v-5h-5v-2h5z" fill="#35d835"/><path d="M1205 428h2v5h5v2h-5v5h-2v-5h-5v-2h5z" fill="#35d835"/><path d="M480 457h2v5h5v2h-5v5h-2v-5h-5v-2h5z" fill="#35d835"/><path d="M515 457h2v5h5v2h-5v5h-2v-5h-5v-2h5z" fill="#35d835"/><path d="M549 458h2v5h5v2h-5v5h-2v-5h-5v-2h5z" fill="#35d835"/><path d="M583 458h2v5h5v2h-5v5h-2v-5h-5v-2h5z" fill="#35d835"/><path d="M618 458h2v5h5v2h-5v5h-2v-5h-5v-2h5z" fill="#35d835"/><path d="M652 458h2v5h5v2h-5v5h-2v-5h-5v-2h5z" fill="#35d835"/><path d="M686 458h2v5h5v2h-5v5h-2v-5h-5v-2h5z" fill="#35d835"/><path d="M721 459h2v5h5v2h-5v5h-2v-5h-5v-2h5z" fill="#35d835"/><path d="M755 459h2v5h5v2h-5v5h-2v-5h-5v-2h5z" fill="#35d835"/><path d="M789 459h2v5h5v2h-5v5h-2v-5h-5v-2h5z" fill="#35d835"/><path d="M823 459h2v5h5v2h-5v5h-2v-5h-5v-2h5z" fill="#35d835"/><path d="M858 460h2v5h5v2h-5v5h-2v-5h-5v-2h5z" fill="#35d835"/><path d="M892 460h2v5h5v2h-5v5h-2v-5h-5v-2h5z" fill="#35d835"/><path d="M927 460h2v5h5v2h-5v5h-2v-5h-5v-2h5z" fill="#35d835"/><path d="M961 460h2v5h5v2h-5v5h-2v-5h-5v-2h5z" fill="#35d835"/><path d="M995 460h2v5h5v2h-5v5h-2v-5h-5v-2h5z" fill="#35d835"/><path d="M1030 461h2v5h5v2h-5v5h-2v-5h-5v-2h5z" fill="#35d835"/><path d="M1064 461h2v5h5v2h-5v5h-2v-5h-5v-2h5z" fill="#35d835"/><path d="M1098 461h2v5h5v2h-5v5h-2v-5h-5v-2h5z" fill="#35d835"/><path d="M1133 461h2v5h5v2h-5v5h-2v-5h-5v-2h5z" fill="#35d835"/><path d="M1167 462h2v5h5v2h-5v5h-2v-5h-5v-2h5z" fill="#35d835"/><path d="M1202 462h2v5h5v2h-5v5h-2v-5h-5v-2h5z" fill="#35d835"/><path d="M481 490h2v5h5v2h-5v5h-2v-5h-5v-2h5z" fill="#35d835"/><path d="M515 490h2v5h5v2h-5v5h-2v-5h-5v-2h5z" fill="#35d835"/><path d="M549 491h2v5h5v2h-5v5h-2v-5h-5v-2h5z" fill="#35d835"/><path d="M583 491h2v5h5v2h-5v5h-2v-5h-5v-2h5z" fill="#35d835"/><path d="M618 491h2v5h5v2h-5v5h-2v-5h-5v-2h5z" fill="#35d835"/><path d="M652 491h2v5h5v2h-5v5h-2v-5h-5v-2h5z" fill="#35d835"/><path d="M686 491h2v5h5v2h-5v5h-2v-5h-5v-2h5z" fill="#35d835"/><path d="M720 492h2v5h5v2h-5v5h-2v-5h-5v-2h5z" fill="#35d835"/><path d="M754 492h2v5h5v2h-5v5h-2v-5h-5v-2h5z" fill="#35d835"/><path d="M788 492h2v5h5v2h-5v5h-2v-5h-5v-2h5z" fill="#35d835"/><path d="M822 492h2v5h5v2h-5v5h-2v-5h-5v-2h5z" fill="#35d835"/><path d="M856 493h2v5h5v2h-5v5h-2v-5h-5v-2h5z" fill="#35d835"/><path d="M890 493h2v5h5v2h-5v5h-2v-5h-5v-2h5z" fill="#35d835"/><path d="M925 493h2v5h5v2h-5v5h-2v-5h-5v-2h5z" fill="#35d835"/><path d="M959 493h2v5h5v2h-5v5h-2v-5h-5v-2h5z" fill="#35d835"/><path d="M993 493h2v5h5v2h-5v5h-2v-5h-5v-2h5z" fill="#35d835"/><path d="M1027 494h2v5h5v2h-5v5h-2v-5h-5v-2h5z" fill="#35d835"/><path d="M1061 494h2v5h5v2h-5v5h-2v-5h-5v-2h5z" fill="#35d835"/><path d="M1095 494h2v5h5v2h-5v5h-2v-5h-5v-2h5z" fill="#35d835"/><path d="M1130 494h2v5h5v2h-5v5h-2v-5h-5v-2h5z" fill="#35d835"/><path d="M1164 495h2v5h5v2h-5v5h-2v-5h-5v-2h5z" fill="#35d835"/><path d="M1198 495h2v5h5v2h-5v5h-2v-5h-5v-2h5z" fill="#35d835"/><path d="M482 523h2v5h5v2h-5v5h-2v-5h-5v-2h5z" fill="#35d835"/><path d="M516 523h2v5h5v2h-5v5h-2v-5h-5v-2h5z" fill="#35d835"/><path d="M550 523h2v5h5v2h-5v5h-2v-5h-5v-2h5z" fill="#35d835"/><path d="M584 523h2v5h5v2h-5v5h-2v-5h-5v-2h5z" fill="#35d835"/><path d="M618 524h2v5h5v2h-5v5h-2v-5h-5v-2h5z" fill="#35d835"/><path d="M651 524h2v5h5v2h-5v5h-2v-5h-5v-2h5z" fill="#35d835"/><path d="M685 524h2v5h5v2h-5v5h-2v-5h-5v-2h5z" fill="#35d835"/><path d="M719 524h2v5h5v2h-5v5h-2v-5h-5v-2h5z" fill="#35d835"/><path d="M753 524h2v5h5v2h-5v5h-2v-5h-5v-2h5z" fill="#35d835"/><path d="M787 525h2v5h5v2h-5v5h-2v-5h-5v-2h5z" fill="#35d835"/><path d="M821 525h2v5h5v2h-5v5h-2v-5h-5v-2h5z" fill="#35d835"/><path d="M855 525h2v5h5v2h-5v5h-2v-5h-5v-2h5z" fill="#35d835"/><path d="M889 525h2v5h5v2h-5v5h-2v-5h-5v-2h5z" fill="#35d835"/><path d="M923 526h2v5h5v2h-5v5h-2v-5h-5v-2h5z" fill="#35d835"/><path d="M957 526h2v5h5v2h-5v5h-2v-5h-5v-2h5z" fill="#35d835"/><path d="M991 526h2v5h5v2h-5v5h-2v-5h-5v-2h5z" fill="#35d835"/><path d="M1025 526h2v5h5v2h-5v5h-2v-5h-5v-2h5z" fill="#35d835"/><path d="M1059 527h2v5h5v2h-5v5h-2v-5h-5v-2h5z" fill="#35d835"/><path d="M1093 527h2v5h5v2h-5v5h-2v-5h-5v-2h5z" fill="#35d835"/><path d="M1127 527h2v5h5v2h-5v5h-2v-5h-5v-2h5z" fill="#35d835"/><path d="M1161 527h2v5h5v2h-5v5h-2v-5h-5v-2h5z" fill="#35d835"/><path d="M1195 527h2v5h5v2h-5v5h-2v-5h-5v-2h5z" fill="#35d835"/><path d="M483 555h2v5h5v2h-5v5h-2v-5h-5v-2h5z" fill="#35d835"/><path d="M516 555h2v5h5v2h-5v5h-2v-5h-5v-2h5z" fill="#35d835"/><path d="M550 555h2v5h5v2h-5v5h-2v-5h-5v-2h5z" fill="#35d835"/><path d="M584 556h2v5h5v2h-5v5h-2v-5h-5v-2h5z" fill="#35d835"/><path d="M617 556h2v5h5v2h-5v5h-2v-5h-5v-2h5z" fill="#35d835"/><path d="M651 556h2v5h5v2h-5v5h-2v-5h-5v-2h5z" fill="#35d835"/><path d="M685 556h2v5h5v2h-5v5h-2v-5h-5v-2h5z" fill="#35d835"/><path d="M719 556h2v5h5v2h-5v5h-2v-5h-5v-2h5z" fill="#35d835"/><path d="M752 557h2v5h5v2h-5v5h-2v-5h-5v-2h5z" fill="#35d835"/><path d="M786 557h2v5h5v2h-5v5h-2v-5h-5v-2h5z" fill="#35d835"/><path d="M820 557h2v5h5v2h-5v5h-2v-5h-5v-2h5z" fill="#35d835"/><path d="M853 557h2v5h5v2h-5v5h-2v-5h-5v-2h5z" fill="#35d835"/><path d="M887 558h2v5h5v2h-5v5h-2v-5h-5v-2h5z" fill="#35d835"/><path d="M921 558h2v5h5v2h-5v5h-2v-5h-5v-2h5z" fill="#35d835"/><path d="M955 558h2v5h5v2h-5v5h-2v-5h-5v-2h5z" fill="#35d835"/><path d="M988 558h2v5h5v2h-5v5h-2v-5h-5v-2h5z" fill="#35d835"/><path d="M1022 559h2v5h5v2h-5v5h-2v-5h-5v-2h5z" fill="#35d835"/><path d="M1056 559h2v5h5v2h-5v5h-2v-5h-5v-2h5z" fill="#35d835"/><path d="M1090 559h2v5h5v2h-5v5h-2v-5h-5v-2h5z" fill="#35d835"/><path d="M1124 559h2v5h5v2h-5v5h-2v-5h-5v-2h5z" fill="#35d835"/><path d="M1157 559h2v5h5v2h-5v5h-2v-5h-5v-2h5z" fill="#35d835"/><path d="M1191 560h2v5h5v2h-5v5h-2v-5h-5v-2h5z" fill="#35d835"/><path d="M450 587h2v5h5v2h-5v5h-2v-5h-5v-2h5z" fill="#35d835"/><path d="M483 587h2v5h5v2h-5v5h-2v-5h-5v-2h5z" fill="#35d835"/><path d="M517 587h2v5h5v2h-5v5h-2v-5h-5v-2h5z" fill="#35d835"/><path d="M550 587h2v5h5v2h-5v5h-2v-5h-5v-2h5z" fill="#35d835"/><path d="M584 587h2v5h5v2h-5v5h-2v-5h-5v-2h5z" fill="#35d835"/><path d="M617 588h2v5h5v2h-5v5h-2v-5h-5v-2h5z" fill="#35d835"/><path d="M651 588h2v5h5v2h-5v5h-2v-5h-5v-2h5z" fill="#35d835"/><path d="M684 588h2v5h5v2h-5v5h-2v-5h-5v-2h5z" fill="#35d835"/><path d="M718 588h2v5h5v2h-5v5h-2v-5h-5v-2h5z" fill="#35d835"/><path d="M751 589h2v5h5v2h-5v5h-2v-5h-5v-2h5z" fill="#35d835"/><path d="M785 589h2v5h5v2h-5v5h-2v-5h-5v-2h5z" fill="#35d835"/><path d="M819 589h2v5h5v2h-5v5h-2v-5h-5v-2h5z" fill="#35d835"/><path d="M852 589h2v5h5v2h-5v5h-2v-5h-5v-2h5z" fill="#35d835"/><path d="M886 590h2v5h5v2h-5v5h-2v-5h-5v-2h5z" fill="#35d835"/><path d="M919 590h2v5h5v2h-5v5h-2v-5h-5v-2h5z" fill="#35d835"/><path d="M953 590h2v5h5v2h-5v5h-2v-5h-5v-2h5z" fill="#35d835"/><path d="M986 590h2v5h5v2h-5v5h-2v-5h-5v-2h5z" fill="#35d835"/><path d="M1020 590h2v5h5v2h-5v5h-2v-5h-5v-2h5z" fill="#35d835"/><path d="M1053 591h2v5h5v2h-5v5h-2v-5h-5v-2h5z" fill="#35d835"/><path d="M1087 591h2v5h5v2h-5v5h-2v-5h-5v-2h5z" fill="#35d835"/><path d="M1121 591h2v5h5v2h-5v5h-2v-5h-5v-2h5z" fill="#35d835"/><path d="M1154 591h2v5h5v2h-5v5h-2v-5h-5v-2h5z" fill="#35d835"/><path d="M1188 592h2v5h5v2h-5v5h-2v-5h-5v-2h5z" fill="#35d835"/><path d="M451 618h2v5h5v2h-5v5h-2v-5h-5v-2h5z" fill="#35d835"/><path d="M484 618h2v5h5v2h-5v5h-2v-5h-5v-2h5z" fill="#35d835"/><path d="M518 618h2v5h5v2h-5v5h-2v-5h-5v-2h5z" fill="#35d835"/><path d="M551 619h2v5h5v2h-5v5h-2v-5h-5v-2h5z" fill="#35d835"/><path d="M584 619h2v5h5v2h-5v5h-2v-5h-5v-2h5z" fill="#35d835"/><path d="M617 619h2v5h5v2h-5v5h-2v-5h-5v-2h5z" fill="#35d835"/><path d="M651 619h2v5h5v2h-5v5h-2v-5h-5v-2h5z" fill="#35d835"/><path d="M684 620h2v5h5v2h-5v5h-2v-5h-5v-2h5z" fill="#35d835"/><path d="M717 620h2v5h5v2h-5v5h-2v-5h-5v-2h5z" fill="#35d835"/><path d="M751 620h2v5h5v2h-5v5h-2v-5h-5v-2h5z" fill="#35d835"/><path d="M784 620h2v5h5v2h-5v5h-2v-5h-5v-2h5z" fill="#35d835"/><path d="M817 621h2v5h5v2h-5v5h-2v-5h-5v-2h5z" fill="#35d835"/><path d="M851 621h2v5h5v2h-5v5h-2v-5h-5v-2h5z" fill="#35d835"/><path d="M884 621h2v5h5v2h-5v5h-2v-5h-5v-2h5z" fill="#35d835"/><path d="M917 621h2v5h5v2h-5v5h-2v-5h-5v-2h5z" fill="#35d835"/><path d="M951 621h2v5h5v2h-5v5h-2v-5h-5v-2h5z" fill="#35d835"/><path d="M984 622h2v5h5v2h-5v5h-2v-5h-5v-2h5z" fill="#35d835"/><path d="M1017 622h2v5h5v2h-5v5h-2v-5h-5v-2h5z" fill="#35d835"/><path d="M1051 622h2v5h5v2h-5v5h-2v-5h-5v-2h5z" fill="#35d835"/><path d="M1084 622h2v5h5v2h-5v5h-2v-5h-5v-2h5z" fill="#35d835"/><path d="M1118 623h2v5h5v2h-5v5h-2v-5h-5v-2h5z" fill="#35d835"/><path d="M1151 623h2v5h5v2h-5v5h-2v-5h-5v-2h5z" fill="#35d835"/><path d="M1184 623h2v5h5v2h-5v5h-2v-5h-5v-2h5z" fill="#35d835"/><path d="M452 649h2v5h5v2h-5v5h-2v-5h-5v-2h5z" fill="#35d835"/><path d="M485 649h2v5h5v2h-5v5h-2v-5h-5v-2h5z" fill="#35d835"/><path d="M518 650h2v5h5v2h-5v5h-2v-5h-5v-2h5z" fill="#35d835"/><path d="M551 650h2v5h5v2h-5v5h-2v-5h-5v-2h5z" fill="#35d835"/><path d="M584 650h2v5h5v2h-5v5h-2v-5h-5v-2h5z" fill="#35d835"/><path d="M617 650h2v5h5v2h-5v5h-2v-5h-5v-2h5z" fill="#35d835"/><path d="M650 651h2v5h5v2h-5v5h-2v-5h-5v-2h5z" fill="#35d835"/><path d="M684 651h2v5h5v2h-5v5h-2v-5h-5v-2h5z" fill="#35d835"/><path d="M717 651h2v5h5v2h-5v5h-2v-5h-5v-2h5z" fill="#35d835"/><path d="M750 651h2v5h5v2h-5v5h-2v-5h-5v-2h5z" fill="#35d835"/><path d="M783 651h2v5h5v2h-5v5h-2v-5h-5v-2h5z" fill="#35d835"/><path d="M816 652h2v5h5v2h-5v5h-2v-5h-5v-2h5z" fill="#35d835"/><path d="M849 652h2v5h5v2h-5v5h-2v-5h-5v-2h5z" fill="#35d835"/><path d="M882 652h2v5h5v2h-5v5h-2v-5h-5v-2h5z" fill="#35d835"/><path d="M916 652h2v5h5v2h-5v5h-2v-5h-5v-2h5z" fill="#35d835"/><path d="M949 653h2v5h5v2h-5v5h-2v-5h-5v-2h5z" fill="#35d835"/><path d="M982 653h2v5h5v2h-5v5h-2v-5h-5v-2h5z" fill="#35d835"/><path d="M1015 653h2v5h5v2h-5v5h-2v-5h-5v-2h5z" fill="#35d835"/><path d="M1048 653h2v5h5v2h-5v5h-2v-5h-5v-2h5z" fill="#35d835"/><path d="M1082 654h2v5h5v2h-5v5h-2v-5h-5v-2h5z" fill="#35d835"/><path d="M1115 654h2v5h5v2h-5v5h-2v-5h-5v-2h5z" fill="#35d835"/><path d="M1148 654h2v5h5v2h-5v5h-2v-5h-5v-2h5z" fill="#35d835"/><path d="M1181 654h2v5h5v2h-5v5h-2v-5h-5v-2h5z" fill="#35d835"/><path d="M453 680h2v5h5v2h-5v5h-2v-5h-5v-2h5z" fill="#35d835"/><path d="M486 680h2v5h5v2h-5v5h-2v-5h-5v-2h5z" fill="#35d835"/><path d="M519 680h2v5h5v2h-5v5h-2v-5h-5v-2h5z" fill="#35d835"/><path d="M552 681h2v5h5v2h-5v5h-2v-5h-5v-2h5z" fill="#35d835"/><path d="M584 681h2v5h5v2h-5v5h-2v-5h-5v-2h5z" fill="#35d835"/><path d="M617 681h2v5h5v2h-5v5h-2v-5h-5v-2h5z" fill="#35d835"/><path d="M650 681h2v5h5v2h-5v5h-2v-5h-5v-2h5z" fill="#35d835"/><path d="M683 682h2v5h5v2h-5v5h-2v-5h-5v-2h5z" fill="#35d835"/><path d="M716 682h2v5h5v2h-5v5h-2v-5h-5v-2h5z" fill="#35d835"/><path d="M749 682h2v5h5v2h-5v5h-2v-5h-5v-2h5z" fill="#35d835"/><path d="M782 682h2v5h5v2h-5v5h-2v-5h-5v-2h5z" fill="#35d835"/><path d="M815 682h2v5h5v2h-5v5h-2v-5h-5v-2h5z" fill="#35d835"/><path d="M848 683h2v5h5v2h-5v5h-2v-5h-5v-2h5z" fill="#35d835"/><path d="M881 683h2v5h5v2h-5v5h-2v-5h-5v-2h5z" fill="#35d835"/><path d="M914 683h2v5h5v2h-5v5h-2v-5h-5v-2h5z" fill="#35d835"/><path d="M947 683h2v5h5v2h-5v5h-2v-5h-5v-2h5z" fill="#35d835"/><path d="M980 684h2v5h5v2h-5v5h-2v-5h-5v-2h5z" fill="#35d835"/><path d="M1013 684h2v5h5v2h-5v5h-2v-5h-5v-2h5z" fill="#35d835"/><path d="M1046 684h2v5h5v2h-5v5h-2v-5h-5v-2h5z" fill="#35d835"/><path d="M1079 684h2v5h5v2h-5v5h-2v-5h-5v-2h5z" fill="#35d835"/><path d="M1112 685h2v5h5v2h-5v5h-2v-5h-5v-2h5z" fill="#35d835"/><path d="M1145 685h2v5h5v2h-5v5h-2v-5h-5v-2h5z" fill="#35d835"/><path d="M1178 685h2v5h5v2h-5v5h-2v-5h-5v-2h5z" fill="#35d835"/><path d="M454 710h2v5h5v2h-5v5h-2v-5h-5v-2h5z" fill="#35d835"/><path d="M486 711h2v5h5v2h-5v5h-2v-5h-5v-2h5z" fill="#35d835"/><path d="M519 711h2v5h5v2h-5v5h-2v-5h-5v-2h5z" fill="#35d835"/><path d="M552 711h2v5h5v2h-5v5h-2v-5h-5v-2h5z" fill="#35d835"/><path d="M585 711h2v5h5v2h-5v5h-2v-5h-5v-2h5z" fill="#35d835"/><path d="M617 711h2v5h5v2h-5v5h-2v-5h-5v-2h5z" fill="#35d835"/><path d="M650 712h2v5h5v2h-5v5h-2v-5h-5v-2h5z" fill="#35d835"/><path d="M683 712h2v5h5v2h-5v5h-2v-5h-5v-2h5z" fill="#35d835"/><path d="M716 712h2v5h5v2h-5v5h-2v-5h-5v-2h5z" fill="#35d835"/><path d="M748 712h2v5h5v2h-5v5h-2v-5h-5v-2h5z" fill="#35d835"/><path d="M781 713h2v5h5v2h-5v5h-2v-5h-5v-2h5z" fill="#35d835"/><path d="M814 713h2v5h5v2h-5v5h-2v-5h-5v-2h5z" fill="#35d835"/><path d="M847 713h2v5h5v2h-5v5h-2v-5h-5v-2h5z" fill="#35d835"/><path d="M879 713h2v5h5v2h-5v5h-2v-5h-5v-2h5z" fill="#35d835"/><path d="M912 714h2v5h5v2h-5v5h-2v-5h-5v-2h5z" fill="#35d835"/><path d="M945 714h2v5h5v2h-5v5h-2v-5h-5v-2h5z" fill="#35d835"/><path d="M978 714h2v5h5v2h-5v5h-2v-5h-5v-2h5z" fill="#35d835"/><path d="M1011 714h2v5h5v2h-5v5h-2v-5h-5v-2h5z" fill="#35d835"/><path d="M1043 715h2v5h5v2h-5v5h-2v-5h-5v-2h5z" fill="#35d835"/><path d="M1076 715h2v5h5v2h-5v5h-2v-5h-5v-2h5z" fill="#35d835"/><path d="M1109 715h2v5h5v2h-5v5h-2v-5h-5v-2h5z" fill="#35d835"/><path d="M1142 715h2v5h5v2h-5v5h-2v-5h-5v-2h5z" fill="#35d835"/><path d="M1175 715h2v5h5v2h-5v5h-2v-5h-5v-2h5z" fill="#35d835"/><path d="M1207 716h2v5h5v2h-5v5h-2v-5h-5v-2h5z" fill="#35d835"/><path d="M455 740h2v5h5v2h-5v5h-2v-5h-5v-2h5z" fill="#35d835"/><path d="M487 741h2v5h5v2h-5v5h-2v-5h-5v-2h5z" fill="#35d835"/><path d="M520 741h2v5h5v2h-5v5h-2v-5h-5v-2h5z" fill="#35d835"/><path d="M552 741h2v5h5v2h-5v5h-2v-5h-5v-2h5z" fill="#35d835"/><path d="M585 741h2v5h5v2h-5v5h-2v-5h-5v-2h5z" fill="#35d835"/><path d="M617 742h2v5h5v2h-5v5h-2v-5h-5v-2h5z" fill="#35d835"/><path d="M650 742h2v5h5v2h-5v5h-2v-5h-5v-2h5z" fill="#35d835"/><path d="M682 742h2v5h5v2h-5v5h-2v-5h-5v-2h5z" fill="#35d835"/><path d="M715 742h2v5h5v2h-5v5h-2v-5h-5v-2h5z" fill="#35d835"/><path d="M748 742h2v5h5v2h-5v5h-2v-5h-5v-2h5z" fill="#35d835"/><path d="M780 743h2v5h5v2h-5v5h-2v-5h-5v-2h5z" fill="#35d835"/><path d="M813 743h2v5h5v2h-5v5h-2v-5h-5v-2h5z" fill="#35d835"/><path d="M845 743h2v5h5v2h-5v5h-2v-5h-5v-2h5z" fill="#35d835"/><path d="M878 743h2v5h5v2h-5v5h-2v-5h-5v-2h5z" fill="#35d835"/><path d="M910 744h2v5h5v2h-5v5h-2v-5h-5v-2h5z" fill="#35d835"/><path d="M943 744h2v5h5v2h-5v5h-2v-5h-5v-2h5z" fill="#35d835"/><path d="M976 744h2v5h5v2h-5v5h-2v-5h-5v-2h5z" fill="#35d835"/><path d="M1008 744h2v5h5v2h-5v5h-2v-5h-5v-2h5z" fill="#35d835"/><path d="M1041 745h2v5h5v2h-5v5h-2v-5h-5v-2h5z" fill="#35d835"/><path d="M1074 745h2v5h5v2h-5v5h-2v-5h-5v-2h5z" fill="#35d835"/><path d="M1106 745h2v5h5v2h-5v5h-2v-5h-5v-2h5z" fill="#35d835"/><path d="M1139 745h2v5h5v2h-5v5h-2v-5h-5v-2h5z" fill="#35d835"/><path d="M1171 746h2v5h5v2h-5v5h-2v-5h-5v-2h5z" fill="#35d835"/><path d="M1204 746h2v5h5v2h-5v5h-2v-5h-5v-2h5z" fill="#35d835"/><path d="M455 770h2v5h5v2h-5v5h-2v-5h-5v-2h5z" fill="#35d835"/><path d="M488 770h2v5h5v2h-5v5h-2v-5h-5v-2h5z" fill="#35d835"/><path d="M520 771h2v5h5v2h-5v5h-2v-5h-5v-2h5z" fill="#35d835"/><path d="M553 771h2v5h5v2h-5v5h-2v-5h-5v-2h5z" fill="#35d835"/><path d="M585 771h2v5h5v2h-5v5h-2v-5h-5v-2h5z" fill="#35d835"/><path d="M617 771h2v5h5v2h-5v5h-2v-5h-5v-2h5z" fill="#35d835"/><path d="M650 772h2v5h5v2h-5v5h-2v-5h-5v-2h5z" fill="#35d835"/><path d="M682 772h2v5h5v2h-5v5h-2v-5h-5v-2h5z" fill="#35d835"/><path d="M714 772h2v5h5v2h-5v5h-2v-5h-5v-2h5z" fill="#35d835"/><path d="M747 772h2v5h5v2h-5v5h-2v-5h-5v-2h5z" fill="#35d835"/><path d="M779 772h2v5h5v2h-5v5h-2v-5h-5v-2h5z" fill="#35d835"/><path d="M812 773h2v5h5v2h-5v5h-2v-5h-5v-2h5z" fill="#35d835"/><path d="M844 773h2v5h5v2h-5v5h-2v-5h-5v-2h5z" fill="#35d835"/><path d="M876 773h2v5h5v2h-5v5h-2v-5h-5v-2h5z" fill="#35d835"/><path d="M909 773h2v5h5v2h-5v5h-2v-5h-5v-2h5z" fill="#35d835"/><path d="M941 774h2v5h5v2h-5v5h-2v-5h-5v-2h5z" fill="#35d835"/><path d="M974 774h2v5h5v2h-5v5h-2v-5h-5v-2h5z" fill="#35d835"/><path d="M1006 774h2v5h5v2h-5v5h-2v-5h-5v-2h5z" fill="#35d835"/><path d="M1039 774h2v5h5v2h-5v5h-2v-5h-5v-2h5z" fill="#35d835"/><path d="M1071 775h2v5h5v2h-5v5h-2v-5h-5v-2h5z" fill="#35d835"/><path d="M1103 775h2v5h5v2h-5v5h-2v-5h-5v-2h5z" fill="#35d835"/><path d="M1136 775h2v5h5v2h-5v5h-2v-5h-5v-2h5z" fill="#35d835"/><path d="M1168 775h2v5h5v2h-5v5h-2v-5h-5v-2h5z" fill="#35d835"/><path d="M1201 776h2v5h5v2h-5v5h-2v-5h-5v-2h5z" fill="#35d835"/>
</g>
</svg>
<div class="t" id="nm" style="left:11px;top:145px;color:#90ee90">Name: cam1_grid.png</div>
<div class="t" id="sz" style="left:11px;top:159px;color:#90ee90">Size: 750x750</div>
<div class="t" id="xy" style="left:11px;top:173px;color:#90ee90">X: 428.78 Y: 195.40</div>

<!-- right panel list -->
<div class="a" style="left:1664px;top:96px;width:256px;height:425px;background:#fff;border:1px solid #6e6e6e"></div>
<div class="a" style="left:1665px;top:97px;width:253px;height:27px;background:linear-gradient(#fcfcfc,#efefef)"></div>
<div class="a" style="left:1903px;top:124px;width:15px;height:396px;background:#f0f0f0"></div>
<svg style="left:1664px;top:96px" width="256" height="430">
<path d="M7 9.5 L11.5 9.5 L13 11.5 L21 11.5 L21 21.5 L7 21.5 Z" fill="#e3c18e"/>
<path d="M11 9.5 L13 11" stroke="#b55a00" stroke-width="0.8"/>
<path d="M13 18 H20 M16.5 14.5 V21.5" stroke="#b55a00" stroke-width="1.3"/>
<path d="M31 9.5 L35.5 9.5 L37 11.5 L45 11.5 L45 21.5 L31 21.5 Z" fill="#e3c18e"/>
<path d="M35 9.5 L37 11" stroke="#b55a00" stroke-width="0.8"/>
<path d="M37 18 H44 M40.5 14.5 V21.5" stroke="#b55a00" stroke-width="1.3"/>
<path d="M29.5 15.5 H35.5 M29.5 18.5 H35.5 M29.5 21.5 H35.5" stroke="#3a9ad9" stroke-width="2"/>
<path d="M55 8 L66 19 M66 8 L55 19" stroke="#e83a30" stroke-width="2.8" stroke-linecap="round"/>
<line x1="76.5" y1="6" x2="76.5" y2="23" stroke="#bbb"/>
<rect x="221" y="10.5" width="7" height="7" fill="#505050"/><rect x="222" y="11.5" width="2" height="2" fill="#ddd"/>
<path d="M230 11 H239 M232 16.5 H239" stroke="#505050" stroke-width="1.5"/>
<path d="M245.5 13 H251.5 L248.5 16 Z" fill="#000"/>
<rect x="1.5" y="28.5" width="236" height="54" fill="#aaaaaa" stroke="#000" stroke-width="1"/>
<path d="M243 39 L246.5 35.5 L250 39" fill="none" stroke="#bdbdbd" stroke-width="1.5"/>
<path d="M243 413 L246.5 416.5 L250 413" fill="none" stroke="#bdbdbd" stroke-width="1.5"/>
<defs><pattern id="thp" x="9" y="33" width="2" height="2" patternUnits="userSpaceOnUse"><rect width="2" height="2" fill="#d4d4d4"/><rect width="1" height="2" fill="#9a9a9a"/><rect width="2" height="1" fill="#9a9a9a"/><rect width="1" height="1" fill="#3a3a3a"/></pattern></defs>
<rect x="9" y="33" width="46" height="45" fill="url(#thp)"/>
</svg>
<div class="t" id="fname" style="left:1728px;top:129px;font-weight:bold">cam1_grid.png</div>
<div class="t" id="fpath" style="left:1728px;top:154px;text-decoration:underline;color:#000">C:\ProgramData\Aurora V...</div>
<!-- params tabs -->
<div class="a" style="left:1664px;top:545px;width:254px;height:578px;background:#fff;border:1px solid #d9d9d9"></div>
<div class="a" style="left:1732px;top:527px;width:98px;height:19px;background:#f0f0f0;border:1px solid #d9d9d9;border-bottom:none"></div>
<div class="a" style="left:1664px;top:525px;width:69px;height:22px;background:#fff;border:1px solid #d9d9d9;border-bottom:none"></div>
<div class="t" id="ptab" style="left:1672px;top:528px">Parameters</div>
<div class="t" id="rtab" style="left:1739px;top:530px">Results &amp; Statistics</div>
<div class="t" id="psrc" style="left:1685px;top:559px">Points source:</div>
<svg style="left:1680px;top:560px" width="240" height="320">
<circle cx="17.5" cy="27.5" r="6" fill="#fff" stroke="#333" stroke-width="1"/>
<circle cx="17.5" cy="51.5" r="6" fill="#fff" stroke="#333" stroke-width="1"/>
<circle cx="17.5" cy="51.5" r="3.5" fill="#222"/>
</svg>
<div class="t" id="rad1" style="left:1710px;top:581px">Enter points manually</div>
<div class="t" id="rad2" style="left:1710px;top:605px">Calibration grid</div>
<div class="t" id="fpts" style="left:1691px;top:629px">Find points using calibration board:</div>
<div class="a" style="left:1684px;top:649px;width:210px;height:46px;background:#fff;border:1px solid #7a7a7a"></div>
<svg style="left:1684px;top:649px" width="210" height="46">
<defs><pattern id="brd" width="3" height="3" patternUnits="userSpaceOnUse" patternTransform="rotate(8)"><rect width="3" height="3" fill="#6a6a6a"/><rect x="1" y="1" width="1.4" height="1.4" fill="#111"/></pattern></defs>
<path d="M9.5 9.5 L40 14 L36.5 33.5 L6 29 Z" fill="#fafafa" stroke="#d8d8d8" stroke-width="0.8"/>
<path d="M7 29.5 L36 34 L36.5 33 L7.5 28.5 Z" fill="#c8c8c8"/>
<path d="M12.8 12.6 L36.8 16 L33.3 31.2 L9.3 27.7 Z" fill="url(#brd)"/>
<path d="M196 20 L200.5 24.5 L205 20" fill="none" stroke="#444" stroke-width="1.1"/>
</svg>
<div class="t" id="circ" style="left:1732px;top:665px;font-weight:bold">Circles</div>
<div class="t" id="lrad" style="left:1705px;top:703px">Circle radius [px]:</div>
<div class="inp" style="left:1796px;top:699px;width:98px;height:20px"></div>
<div class="t" id="vrad" style="left:1798px;top:701px">10,00</div>
<div class="t" id="lspc" style="left:1710px;top:726px">Circle spacing [mm]:</div>
<div class="a" style="left:1824px;top:725px;width:13px;height:13px;background:#fff;border:1px solid #333"></div>
<div class="a" style="left:1839px;top:722px;width:55px;height:20px;background:#fff;border:1px solid #7a7a7a"></div>
<div class="t" id="auto" style="left:1851px;top:725px;font-style:italic;color:#888">(Auto)</div>
<div class="t" id="lthr" style="left:1736px;top:749px">Threshold:</div>
<div class="inp" style="left:1796px;top:747px;width:98px;height:20px"></div>
<div class="t" id="vthr" style="left:1797px;top:749px">20,00</div>
<div class="btn"  style="left:1795px;top:782px;width:98px;height:21px;border:2px solid #0078d7;line-height:17px"></div>
<div class="t" id="locb" style="left:0;top:0;">Locate...</div>
<div class="t" id="linv" style="left:1774px;top:810px">Inverted world Y axis</div>
<div class="a" style="left:1880px;top:810px;width:13px;height:13px;background:#fff;border:1px solid #333"></div>
<div class="t" id="lgth" style="left:1690px;top:844px">Grid Thickness [mm]:</div>
<div class="inp" style="left:1815px;top:842px;width:79px;height:20px"></div>
<div class="t" id="vgth" style="left:1817px;top:844px">0,00</div>
<svg style="left:1660px;top:690px" width="260" height="180">
<g fill="#ececec" stroke="#c4c4c4"><rect x="218.5" y="11.5" width="14" height="15"/><rect x="218.5" y="58.5" width="14" height="16"/><rect x="217.5" y="154.5" width="14" height="16"/></g>
<path d="M222.5 15.5 H228.5 L225.5 12.5 Z M222.5 22.5 H228.5 L225.5 25.5 Z" fill="#000"/>
<path d="M222.5 63 H228.5 L225.5 60 Z M222.5 70 H228.5 L225.5 73 Z" fill="#000"/>
<path d="M221.5 159 H227.5 L224.5 156 Z M221.5 166 H227.5 L224.5 169 Z" fill="#000"/>
<circle cx="155.7" cy="42" r="7" fill="#1e88e5"/>
<circle cx="141" cy="160.5" r="7" fill="#1e88e5"/>
</svg>
<svg style="left:1660px;top:690px" width="260" height="180">
<g fill="none" stroke="#fff" stroke-width="1.7"><path d="M153.5 39.8 Q153.5 37 155.8 37 Q158 37 158 39.3 Q158 41 155.9 42 L155.9 43.6"/><path d="M138.8 158.3 Q138.8 155.5 141.1 155.5 Q143.3 155.5 143.3 157.8 Q143.3 159.5 141.2 160.5 L141.2 162.1"/></g>
<rect x="154.9" y="44.8" width="2" height="2" fill="#fff"/><rect x="140.2" y="163.3" width="2" height="2" fill="#fff"/>
</svg>
<!-- status -->
<svg style="left:1670px;top:990px" width="250" height="90">
<circle cx="20.5" cy="21.5" r="13.5" fill="#119c45"/>
<path d="M13 21 L18.5 27 L28 16.5" fill="none" stroke="#fff" stroke-width="3.2"/>
<circle cx="20.5" cy="66.5" r="13.5" fill="#808080"/>
<path d="M16.2 62.5 Q16.2 57.5 20.8 57.5 Q25 57.5 25 61.8 Q25 64.5 21 66.5 L21 69.5" fill="none" stroke="#fff" stroke-width="2.8"/>
<rect x="19.3" y="72" width="3.4" height="3.4" fill="#fff"/>
</svg>
<div class="t" id="st1" style="left:1713px;top:1005px">Camera parameters are computed.</div>
<div class="t" id="st2" style="left:1713px;top:1050px">World transform is not computed.</div>
<div class="btn"  style="left:1675px;top:1086px;width:192px;height:21px"></div>
<div class="t" id="cwt" style="left:0;top:0;">Compute World Transform</div>
<div class="btn" style="left:1875px;top:1086px;width:21px;height:21px"></div>
<svg style="left:1875px;top:1086px" width="21" height="21"><path d="M6 6 L15 15 M15 6 L6 15" stroke="#e02020" stroke-width="2.2"/></svg>
<!-- dialog buttons -->
<div class="btn"  style="left:1571px;top:1128px;width:79px;height:21px"></div>
<div class="t" id="bprev" style="left:0;top:0;">&lt; Previous</div>
<div class="btn"  style="left:1658px;top:1128px;width:79px;height:21px"></div>
<div class="t" id="bnext" style="left:0;top:0;">Next &gt;</div>
<div class="btn"  style="left:1745px;top:1128px;width:79px;height:21px;background:#cccccc;border-color:#bfbfbf;color:#9a9a9a"></div>
<div class="t" id="bok" style="left:0;top:0;color:#9a9a9a">OK</div>
<div class="btn"  style="left:1832px;top:1128px;width:79px;height:21px"></div>
<div class="t" id="bcan" style="left:0;top:0;">Cancel</div>

<!-- bottom left -->
<div class="t" id="selp" style="left:30px;top:961px">Selected Points:</div>
<div class="a" style="left:7px;top:982px;width:26px;height:26px;background:#cccccc;border:1px solid #bfbfbf"></div>
<div class="a" style="left:7px;top:1016px;width:26px;height:26px;background:#cccccc;border:1px solid #bfbfbf"></div>
<div class="a" style="left:7px;top:1050px;width:26px;height:26px;background:#e1e1e1;border:1px solid #adadad"></div>
<div class="a" style="left:7px;top:1084px;width:26px;height:26px;background:#cccccc;border:1px solid #bfbfbf"></div>
<svg style="left:7px;top:982px" width="26" height="130">
<path d="M6 6 L20 20 M20 6 L6 20" stroke="#a3a3a3" stroke-width="2.6" stroke-linecap="round"/>
<path d="M7 40 L20 53 M20 40 L7 53" stroke="#a3a3a3" stroke-width="2.6" stroke-linecap="round"/>
<path d="M4.5 41.5 L9 46" stroke="#b5b5b5" stroke-width="2.2"/>
<path d="M10.5 72.5 H15.5 V78.5 H21.5 V83.5 H15.5 V89.5 H10.5 V83.5 H4.5 V78.5 H10.5 Z" fill="#f2a81d" stroke="#333" stroke-width="1.1"/>
<rect x="6" y="112.5" width="14" height="4" fill="#a3a3a3" rx="0.5"/>
</svg>
<div class="a" style="left:37px;top:998px;width:566px;height:119px;background:#fff;border:1px solid #d9d9d9"></div>
<div class="a" style="left:37px;top:978px;width:53px;height:21px;background:#fff;border:1px solid #d9d9d9;border-bottom:none"></div>
<div class="t" id="grid11" style="left:44px;top:980px">Grid 1.1</div>
<!-- table -->
<div class="a" style="left:44px;top:1003px;width:554px;height:108px;background:#fff;border:2px solid #111"></div>
<div class="a" style="left:569px;top:1005px;width:11px;height:104px;background:#a6a6a6"></div>
<div class="a" style="left:580px;top:1005px;width:16px;height:104px;background:#f0f0f0"></div>
<div class="a" style="left:580px;top:1021px;width:16px;height:16px;background:#cdcdcd"></div>
<svg style="left:44px;top:1003px" width="560" height="110">
<path d="M540 12.5 L543.5 9 L547 12.5" fill="none" stroke="#606060" stroke-width="1.3"/>
<path d="M540 97 L543.5 100.5 L547 97" fill="none" stroke="#606060" stroke-width="1.3"/>
<g stroke="#a0a0a0" stroke-width="1">
<line x1="25.5" y1="2" x2="25.5" y2="106"/>
<line x1="125.5" y1="2" x2="125.5" y2="106"/>
<line x1="225.5" y1="2" x2="225.5" y2="106"/>
<line x1="325.5" y1="2" x2="325.5" y2="106"/>
<line x1="425.5" y1="2" x2="425.5" y2="106"/>
<line x1="525.5" y1="21" x2="525.5" y2="106"/>
<line x1="25" y1="21.5" x2="525" y2="21.5"/>
<line x1="25" y1="43.5" x2="525" y2="43.5"/>
<line x1="25" y1="65.5" x2="525" y2="65.5"/>
<line x1="25" y1="87.5" x2="525" y2="87.5"/>
</g>
<g stroke="#e3e3e3" stroke-width="1">
<line x1="2" y1="21.5" x2="25" y2="21.5"/>
<line x1="2" y1="43.5" x2="25" y2="43.5"/>
<line x1="2" y1="65.5" x2="25" y2="65.5"/>
<line x1="2" y1="87.5" x2="25" y2="87.5"/>
<line x1="125.5" y1="2" x2="125.5" y2="21"/>
</g>
<rect x="26" y="22" width="99" height="21" fill="#0078d7"/>
<path d="M8 28.5 L13 33 L8 37.5 Z" fill="#333"/>
</svg>
<div class="t" id="h1" style="left:77px;top:1008px">Image X [px]</div>
<div class="t" id="h2" style="left:177px;top:1008px">Image Y [px]</div>
<div class="t" id="h3" style="left:277px;top:1008px">World X [mm]</div>
<div class="t" id="h4" style="left:377px;top:1008px">World Y [mm]</div>
<div class="t" id="h5" style="left:477px;top:1008px">Error [px]</div>
<div class="t" style="left:73px;top:1029px;color:#fff" id="c11">30,65</div>
<div class="t" style="left:173px;top:1029px;color:#808080" id="c12">13,41</div>
<div class="t" id="c13" style="left:273px;top:1029px">1,00</div>
<div class="t" id="c14" style="left:373px;top:1029px">0,00</div>
<div class="t" style="left:73px;top:1051px;color:#808080" id="c21">66,06</div>
<div class="t" style="left:173px;top:1051px;color:#808080" id="c22">13,57</div>
<div class="t" id="c23" style="left:273px;top:1051px">2,00</div>
<div class="t" id="c24" style="left:373px;top:1051px">0,00</div>
<div class="t" style="left:73px;top:1073px;color:#808080" id="c31">101,54</div>
<div class="t" style="left:173px;top:1073px;color:#808080" id="c32">13,73</div>
<div class="t" id="c33" style="left:273px;top:1073px">3,00</div>
<div class="t" id="c34" style="left:373px;top:1073px">0,00</div>
<div class="t" style="left:73px;top:1095px;color:#808080" id="c41">136,99</div>
<div class="t" style="left:173px;top:1095px;color:#808080" id="c42">13,94</div>
<div class="t" id="c43" style="left:273px;top:1095px">4,00</div>
<div class="t" id="c44" style="left:373px;top:1095px">0,00</div>
<div class="t" id="info1" style="left:620px;top:978px;line-height:13px">Use the spreadsheet to manually enter coordinates in world plane.</div>
<div class="t" id="info2" style="left:620px;top:991px;line-height:13px">Empty points will be calculated automatically based on entered points before computing. If there aren't any entered points, default points locations will be accepted.</div>
<div class="t" id="info3" style="left:620px;top:1017px;line-height:13px">In table columns World X, World Y represents points in the world space in mm.</div>
<svg style="left:0;top:1124px" width="30" height="30">
<circle cx="15" cy="14" r="7.2" fill="#1e88e5"/>
<path d="M12.8 12 Q12.8 9.3 15.1 9.3 Q17.3 9.3 17.3 11.6 Q17.3 13.3 15.2 14.3 L15.2 15.9" fill="none" stroke="#fff" stroke-width="1.7"/>
<rect x="14.2" y="17" width="2" height="2" fill="#fff"/>
</svg>
</body></html>
